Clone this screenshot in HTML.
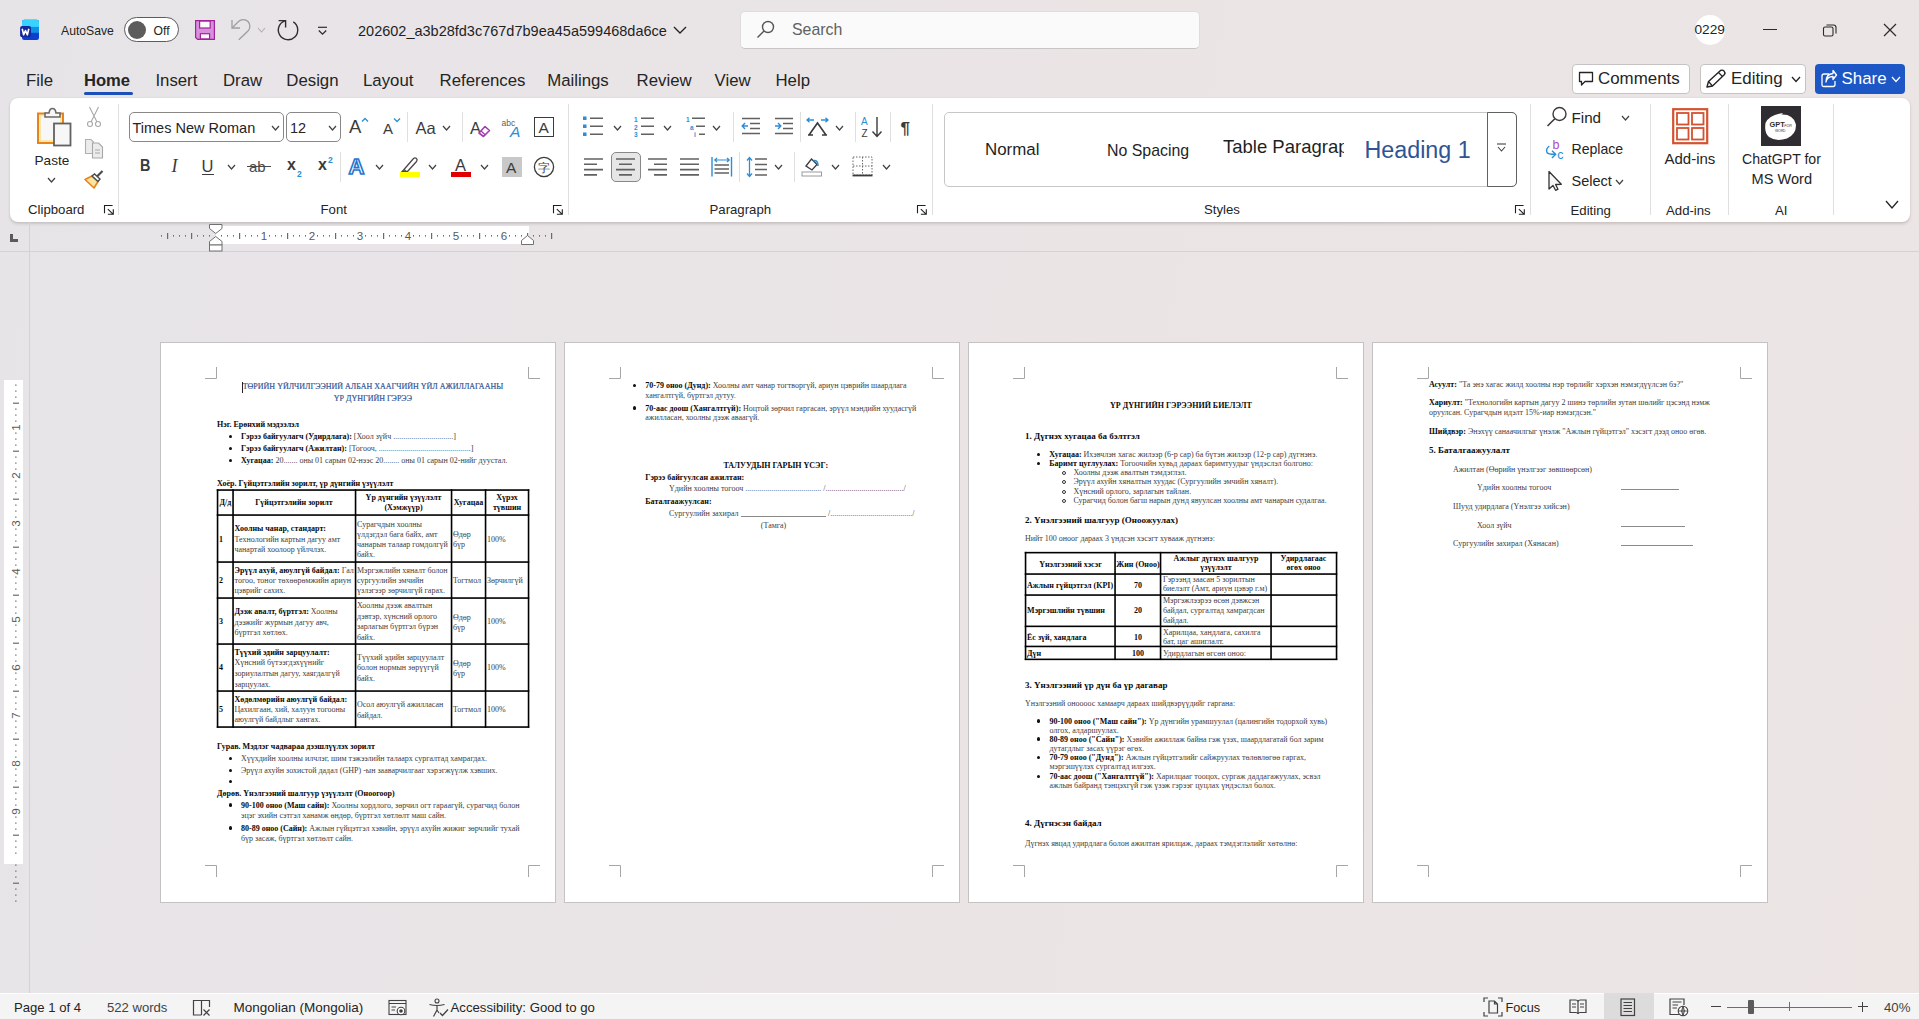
<!DOCTYPE html>
<html><head><meta charset="utf-8"><title>Word</title><style>
*{margin:0;padding:0;box-sizing:border-box}
html,body{width:1919px;height:1019px;overflow:hidden}
body{position:relative;background:linear-gradient(100deg,#e7e4e8 0%,#eae4e6 45%,#ece5e4 100%);font-family:"Liberation Sans",sans-serif;color:#242424}
.a{position:absolute;white-space:nowrap}
svg{position:absolute;overflow:visible}
</style></head><body>
<svg style="left:14px;top:14px" width="32" height="32" viewBox="0 0 32 32"><rect x="8" y="5.8" width="17" height="20.1" rx="2.2" fill="#0c3ecf"/>
<path d="M10.2 5.8 H22.8 Q25 5.8 25 8 V12.9 H8 V8 Q8 5.8 10.2 5.8 Z" fill="#38d2fe"/>
<rect x="8" y="12.9" width="17" height="5.9" fill="#1190e3"/>
<rect x="6.1" y="12.1" width="10.9" height="11.1" rx="2" fill="#10299c"/>
<path d="M8.2 14.7 L9.6 20.8 L11.5 16.6 L13.4 20.8 L14.8 14.7" fill="none" stroke="#fff" stroke-width="1.6" stroke-linejoin="round"/></svg>
<div class="a" style="left:61px;top:24.67px;font-size:12.2px;line-height:1;color:#242424;font-weight:normal;font-family:'Liberation Sans';">AutoSave</div>
<div class="a" style="left:124px;top:17px;width:55px;height:25px;border:1px solid #5c5c5c;border-radius:13px;background:#fff"></div>
<div class="a" style="left:128px;top:21px;width:18px;height:18px;border-radius:50%;background:#5c5c5c"></div>
<div class="a" style="left:153.5px;top:24.67px;font-size:12.2px;line-height:1;color:#242424;font-weight:normal;font-family:'Liberation Sans';">Off</div>
<svg style="left:195px;top:20px" width="20" height="20" viewBox="0 0 20 20"><path d="M0.6 0.6 H19.4 V19.4 H2.6 L0.6 17.4 Z" fill="#d88fdc" stroke="#a1239c" stroke-width="1.2"/>
<rect x="4.6" y="1.1" width="10.6" height="6.9" fill="#fafafa" stroke="#a1239c" stroke-width="1.2"/>
<rect x="5.4" y="13.7" width="9.2" height="5.2" fill="#fafafa" stroke="#a1239c" stroke-width="1.2"/></svg>
<svg style="left:0px;top:0px" width="1" height="1" viewBox="0 0 1 1"><path d="M232 20 V28 H240" fill="none" stroke="#9e9e9e" stroke-width="1.3"/><path d="M232.3 27.7 L238.5 21.5 C241 19 245.5 19 248 21.5 C250.5 24 250.5 28.5 248 31 L238.8 39.8" fill="none" stroke="#9e9e9e" stroke-width="1.3"/></svg>
<svg style="left:257px;top:26.5px" width="9" height="6" viewBox="0 0 9 6"><path d="M1 1 L4.5 5 L8 1" fill="none" stroke="#b0b0b0" stroke-width="1.1"/></svg>
<svg style="left:0px;top:0px" width="1" height="1" viewBox="0 0 1 1"><path d="M293.3 21.9 A9.7 9.7 0 1 1 284.8 20.9" fill="none" stroke="#2e2e2e" stroke-width="1.4"/><path d="M278.6 20.6 H285.6 V27.4" fill="none" stroke="#2e2e2e" stroke-width="1.4"/></svg>
<svg style="left:0px;top:0px" width="1" height="1" viewBox="0 0 1 1"><path d="M318 27.3 H327" stroke="#2e2e2e" stroke-width="1.2"/><path d="M318.8 30.5 L322.5 34.2 L326.2 30.5" fill="none" stroke="#2e2e2e" stroke-width="1.3"/></svg>
<div class="a" style="left:358px;top:23.73px;font-size:14.5px;line-height:1;color:#1f1f1f;font-weight:normal;font-family:'Liberation Sans';">202602_a3b28fd3c767d7b9ea45a599468da6ce</div>
<svg style="left:673px;top:25.5px" width="14" height="8" viewBox="0 0 14 8"><path d="M1 1 L7.0 7 L13 1" fill="none" stroke="#242424" stroke-width="1.4"/></svg>
<div class="a" style="left:740px;top:11px;width:460px;height:38px;background:#fafafa;border:1px solid #dedcdc;border-bottom-color:#c6c4c4;border-radius:5px"></div>
<svg style="left:756px;top:20px" width="20" height="20" viewBox="0 0 20 20"><circle cx="12" cy="7" r="5.5" fill="none" stroke="#555" stroke-width="1.4"/><path d="M8 11 L1.5 17.5" stroke="#555" stroke-width="1.5"/></svg>
<div class="a" style="left:792px;top:22.04px;font-size:15.9px;line-height:1;color:#616161;font-weight:normal;font-family:'Liberation Sans';">Search</div>
<div class="a" style="left:1695px;top:15px;width:30px;height:30px;border-radius:50%;background:#fff"></div>
<div class="a" style="left:1694.5px;top:22.90px;font-size:13.7px;line-height:1;color:#1f1f1f;font-weight:normal;font-family:'Liberation Sans';">0229</div>
<div class="a" style="left:1763px;top:29px;width:14px;height:1.2px;background:#2b2b2b"></div>
<svg style="left:1822px;top:23px" width="16" height="14" viewBox="0 0 16 14"><rect x="1.5" y="4" width="9.5" height="9" rx="1.5" fill="none" stroke="#2b2b2b" stroke-width="1.1"/><path d="M4.5 2 H11.5 Q14 2 14 4.5 V10.5" fill="none" stroke="#2b2b2b" stroke-width="1.1"/></svg>
<svg style="left:1883px;top:23px" width="14" height="14" viewBox="0 0 14 14"><path d="M1 1 L13 13 M13 1 L1 13" stroke="#2b2b2b" stroke-width="1.2"/></svg>
<div class="a" style="left:26px;top:72.78px;font-size:16.8px;line-height:1;color:#242424;font-weight:normal;font-family:'Liberation Sans';">File</div>
<div class="a" style="left:84px;top:72.95px;font-size:16.6px;line-height:1;color:#242424;font-weight:bold;font-family:'Liberation Sans';">Home</div>
<div class="a" style="left:155.4px;top:72.78px;font-size:16.8px;line-height:1;color:#242424;font-weight:normal;font-family:'Liberation Sans';">Insert</div>
<div class="a" style="left:223px;top:72.78px;font-size:16.8px;line-height:1;color:#242424;font-weight:normal;font-family:'Liberation Sans';">Draw</div>
<div class="a" style="left:286.3px;top:72.78px;font-size:16.8px;line-height:1;color:#242424;font-weight:normal;font-family:'Liberation Sans';">Design</div>
<div class="a" style="left:363px;top:72.78px;font-size:16.8px;line-height:1;color:#242424;font-weight:normal;font-family:'Liberation Sans';">Layout</div>
<div class="a" style="left:439.6px;top:72.78px;font-size:16.8px;line-height:1;color:#242424;font-weight:normal;font-family:'Liberation Sans';">References</div>
<div class="a" style="left:547.2px;top:72.78px;font-size:16.8px;line-height:1;color:#242424;font-weight:normal;font-family:'Liberation Sans';">Mailings</div>
<div class="a" style="left:636.6px;top:72.78px;font-size:16.8px;line-height:1;color:#242424;font-weight:normal;font-family:'Liberation Sans';">Review</div>
<div class="a" style="left:714.6px;top:72.78px;font-size:16.8px;line-height:1;color:#242424;font-weight:normal;font-family:'Liberation Sans';">View</div>
<div class="a" style="left:775.5px;top:72.78px;font-size:16.8px;line-height:1;color:#242424;font-weight:normal;font-family:'Liberation Sans';">Help</div>
<div class="a" style="left:84px;top:92px;width:49px;height:3px;background:#1c4fb8;border-radius:2px"></div>
<div class="a" style="left:1572px;top:64px;width:118px;height:30px;background:#fff;border:1px solid #c5c3c3;border-radius:4px"></div>
<svg style="left:1578px;top:71px" width="16" height="16" viewBox="0 0 16 16"><path d="M1.5 1.5 H14.5 V10.5 H7 L3.5 14 V10.5 H1.5 Z" fill="none" stroke="#242424" stroke-width="1.3" stroke-linejoin="round"/></svg>
<div class="a" style="left:1598px;top:71.19px;font-size:16.9px;line-height:1;color:#242424;font-weight:normal;font-family:'Liberation Sans';">Comments</div>
<div class="a" style="left:1700px;top:64px;width:106px;height:30px;background:#fff;border:1px solid #c5c3c3;border-radius:4px"></div>
<svg style="left:1705px;top:69px" width="22" height="20" viewBox="0 0 22 20"><path d="M2 18 L3.5 12.5 L15.5 1.5 Q17.5 0.5 19 2 Q20.5 3.5 19.5 5.5 L7.5 17 Z" fill="none" stroke="#242424" stroke-width="1.4" stroke-linejoin="round"/><path d="M13.5 3.5 L17.5 7.5 M3.5 12.5 L7.5 17" stroke="#242424" stroke-width="1.2"/></svg>
<div class="a" style="left:1731px;top:71.19px;font-size:16.9px;line-height:1;color:#242424;font-weight:normal;font-family:'Liberation Sans';">Editing</div>
<svg style="left:1791px;top:76px" width="10" height="6.5" viewBox="0 0 10 6.5"><path d="M1 1 L5.0 5.5 L9 1" fill="none" stroke="#242424" stroke-width="1.3"/></svg>
<div class="a" style="left:1815px;top:64px;width:90px;height:30px;background:#1d57c6;border-radius:4px"></div>
<svg style="left:1820px;top:69px" width="17" height="19" viewBox="0 0 17 19"><path d="M9 5 H4 Q2 5 2 7 V16 Q2 17.5 3.5 17.5 H13 Q15 17.5 15 15.5 V12" fill="none" stroke="#fff" stroke-width="1.3"/><path d="M6 13 Q7 7.5 13 7.5 V10.5 L16.5 6 L13 1.5 V4.5 Q6 5 6 13 Z" fill="none" stroke="#fff" stroke-width="1.3" stroke-linejoin="round"/></svg>
<div class="a" style="left:1841.5px;top:71.19px;font-size:16.9px;line-height:1;color:#ffffff;font-weight:normal;font-family:'Liberation Sans';">Share</div>
<svg style="left:1891px;top:76px" width="10" height="6.5" viewBox="0 0 10 6.5"><path d="M1 1 L5.0 5.5 L9 1" fill="none" stroke="#ffffff" stroke-width="1.3"/></svg>
<div class="a" style="left:10px;top:98px;width:1900px;height:124px;background:#fff;border-radius:8px;box-shadow:0 1.5px 3px rgba(40,20,20,0.16),0 0 1px rgba(0,0,0,0.08)"></div>
<div class="a" style="left:118px;top:104px;width:1px;height:111px;background:#e1dfdd"></div>
<div class="a" style="left:568px;top:104px;width:1px;height:111px;background:#e1dfdd"></div>
<div class="a" style="left:932px;top:104px;width:1px;height:111px;background:#e1dfdd"></div>
<div class="a" style="left:1530px;top:104px;width:1px;height:111px;background:#e1dfdd"></div>
<div class="a" style="left:1650px;top:104px;width:1px;height:111px;background:#e1dfdd"></div>
<div class="a" style="left:1728px;top:104px;width:1px;height:111px;background:#e1dfdd"></div>
<div class="a" style="left:1833px;top:104px;width:1px;height:111px;background:#e1dfdd"></div>
<svg style="left:36px;top:107px" width="36" height="40" viewBox="0 0 36 40"><rect x="2" y="6.5" width="25" height="29.5" fill="#fbe7a8" stroke="#e8831a" stroke-width="2"/>
<rect x="5" y="9" width="19" height="24" fill="#f7f7f7"/>
<path d="M9 6 H13 Q13.5 1.5 16.5 1.5 Q19.5 1.5 20 6 H24 V10 H9 Z" fill="#f7f7f7" stroke="#6a6a6a" stroke-width="1.6"/>
<rect x="18" y="16.5" width="16.5" height="22" fill="#f7f7f7" stroke="#616161" stroke-width="1.8"/></svg>
<div class="a" style="left:34.5px;top:153.99px;font-size:13.6px;line-height:1;color:#242424;font-weight:normal;font-family:'Liberation Sans';">Paste</div>
<svg style="left:47px;top:177px" width="9" height="6" viewBox="0 0 9 6"><path d="M1 1 L4.5 5 L8 1" fill="none" stroke="#424242" stroke-width="1.2"/></svg>
<svg style="left:86px;top:106px" width="16" height="22" viewBox="0 0 16 22"><path d="M3.5 1 L11 16 M12.5 1 L5 16" stroke="#a8a8a8" stroke-width="1.1"/><circle cx="4" cy="18" r="2.5" fill="none" stroke="#a8a8a8" stroke-width="1.1"/><circle cx="12" cy="18" r="2.5" fill="none" stroke="#a8a8a8" stroke-width="1.1"/></svg>
<svg style="left:84px;top:138px" width="22" height="22" viewBox="0 0 22 22"><path d="M1.5 1.5 H7 L9.5 4 V15.5 H1.5 Z" fill="#ececec" stroke="#b0b0b0" stroke-width="1.1"/><path d="M8.5 5 H14.5 L18.5 9 V20 H8.5 Z" fill="#ececec" stroke="#a8a8a8" stroke-width="1.1"/><path d="M11 12 H16 M11 15 H16" stroke="#a8a8a8" stroke-width="1"/></svg>
<svg style="left:83px;top:169px" width="22" height="22" viewBox="0 0 22 22"><path d="M2 10.5 L11 19 L15 12.5 L9 7 Z" fill="#fbe3a0" stroke="#e8831a" stroke-width="1.6" stroke-linejoin="round"/>
<path d="M9 7 L15 12.5 L17 10 L11.5 5 Z" fill="#fff" stroke="#4a4a4a" stroke-width="1.4"/><path d="M14 7.5 L19.5 2" stroke="#4a4a4a" stroke-width="2.2"/></svg>
<div class="a" style="left:28px;top:203.43px;font-size:13.2px;line-height:1;color:#242424;font-weight:normal;font-family:'Liberation Sans';">Clipboard</div>
<svg style="left:104px;top:205px" width="11" height="11" viewBox="0 0 11 11"><path d="M8.6 0.5 H0.5 V8.3" stroke="#1f1f1f" stroke-width="1.1" fill="none"/><path d="M3.85 4.2 L9.3 9.3 M3.85 9.3 H9.3 V4.3" stroke="#1f1f1f" stroke-width="1.1" fill="none"/></svg>
<div class="a" style="left:129px;top:112px;width:155px;height:30px;border:1px solid #8a8886;border-radius:5px;background:#fff"></div>
<div class="a" style="left:132.5px;top:121.23px;font-size:14.5px;line-height:1;color:#242424;font-weight:normal;font-family:'Liberation Sans';">Times New Roman</div>
<svg style="left:271px;top:125px" width="9" height="6" viewBox="0 0 9 6"><path d="M1 1 L4.5 5 L8 1" fill="none" stroke="#424242" stroke-width="1.2"/></svg>
<div class="a" style="left:286px;top:112px;width:55px;height:30px;border:1px solid #8a8886;border-radius:5px;background:#fff"></div>
<div class="a" style="left:290px;top:121.23px;font-size:14.5px;line-height:1;color:#242424;font-weight:normal;font-family:'Liberation Sans';">12</div>
<svg style="left:328px;top:125px" width="9" height="6" viewBox="0 0 9 6"><path d="M1 1 L4.5 5 L8 1" fill="none" stroke="#424242" stroke-width="1.2"/></svg>
<div class="a" style="left:349px;top:117.84px;font-size:18.5px;line-height:1;color:#3b3b3b;font-weight:normal;font-family:'Liberation Sans';">A</div>
<svg style="left:361px;top:117px" width="8" height="6" viewBox="0 0 8 6"><path d="M1 4.5 L4 1.5 L7 4.5" fill="none" stroke="#2c8ed6" stroke-width="1.3"/></svg>
<div class="a" style="left:383px;top:120.80px;font-size:15px;line-height:1;color:#3b3b3b;font-weight:normal;font-family:'Liberation Sans';">A</div>
<svg style="left:393px;top:117px" width="8" height="6" viewBox="0 0 8 6"><path d="M1 1.5 L4 4.5 L7 1.5" fill="none" stroke="#2c8ed6" stroke-width="1.3"/></svg>
<div class="a" style="left:407px;top:112px;width:1px;height:30px;background:#e1dfdd"></div>
<div class="a" style="left:415.5px;top:119.53px;font-size:16.5px;line-height:1;color:#3b3b3b;font-weight:normal;font-family:'Liberation Sans';">Aa</div>
<svg style="left:442px;top:125px" width="9" height="6" viewBox="0 0 9 6"><path d="M1 1 L4.5 5 L8 1" fill="none" stroke="#424242" stroke-width="1.2"/></svg>
<div class="a" style="left:462px;top:112px;width:1px;height:30px;background:#e1dfdd"></div>
<div class="a" style="left:470px;top:119.53px;font-size:16.5px;line-height:1;color:#3b3b3b;font-weight:normal;font-family:'Liberation Sans';">A</div>
<svg style="left:477px;top:124px" width="14" height="14" viewBox="0 0 14 14"><path d="M2 9 L8 2.5 L12.5 6.5 L6.5 12.5 Z" fill="#fff" stroke="#a23cb0" stroke-width="1.6" stroke-linejoin="round"/><path d="M4 7 L8.5 11" stroke="#a23cb0" stroke-width="1.3"/></svg>
<div class="a" style="left:501.5px;top:118.80px;font-size:8.5px;line-height:1;color:#616161;font-weight:normal;font-family:'Liberation Sans';">abc</div>
<div class="a" style="left:510px;top:123.88px;font-size:15.5px;line-height:1;color:#2c8ed6;font-weight:normal;font-family:'Liberation Sans';font-style:italic">A</div>
<div class="a" style="left:534px;top:117px;width:20px;height:20px;border:1.6px solid #3b3b3b"></div>
<div class="a" style="left:538.5px;top:119.88px;font-size:15.5px;line-height:1;color:#3b3b3b;font-weight:normal;font-family:'Liberation Sans';">A</div>
<div class="a" style="left:139.5px;top:157.78px;font-size:16.8px;line-height:1;color:#3b3b3b;font-weight:bold;font-family:'Liberation Sans';transform:scaleX(0.86);transform-origin:0 0">B</div>
<div class="a" style="left:171.5px;top:156.76px;font-size:18px;line-height:1;color:#3b3b3b;font-weight:normal;font-family:'Liberation Serif';font-style:italic">I</div>
<div class="a" style="left:201.5px;top:158.03px;font-size:16.5px;line-height:1;color:#3b3b3b;font-weight:normal;font-family:'Liberation Sans';">U</div>
<div class="a" style="left:202px;top:174px;width:12px;height:1.3px;background:#3b3b3b"></div>
<svg style="left:227px;top:164px" width="9" height="6" viewBox="0 0 9 6"><path d="M1 1 L4.5 5 L8 1" fill="none" stroke="#424242" stroke-width="1.2"/></svg>
<div class="a" style="left:249px;top:159.30px;font-size:15px;line-height:1;color:#4a4a4a;font-weight:normal;font-family:'Liberation Sans';">ab</div>
<div class="a" style="left:247px;top:166px;width:24px;height:1.2px;background:#4a4a4a"></div>
<div class="a" style="left:287px;top:157.46px;font-size:16px;line-height:1;color:#3b3b3b;font-weight:bold;font-family:'Liberation Sans';">x</div>
<div class="a" style="left:297px;top:169.80px;font-size:8.5px;line-height:1;color:#2c8ed6;font-weight:bold;font-family:'Liberation Sans';">2</div>
<div class="a" style="left:318px;top:157.46px;font-size:16px;line-height:1;color:#3b3b3b;font-weight:bold;font-family:'Liberation Sans';">x</div>
<div class="a" style="left:328px;top:155.80px;font-size:8.5px;line-height:1;color:#2c8ed6;font-weight:bold;font-family:'Liberation Sans';">2</div>
<div class="a" style="left:340px;top:152px;width:1px;height:30px;background:#e1dfdd"></div>
<div class="a" style="left:348.5px;top:156.38px;font-size:22px;line-height:1;color:#fff;font-weight:bold;font-family:'Liberation Sans';-webkit-text-stroke:1.6px #1f77d0">A</div>
<svg style="left:375px;top:164px" width="9" height="6" viewBox="0 0 9 6"><path d="M1 1 L4.5 5 L8 1" fill="none" stroke="#424242" stroke-width="1.2"/></svg>
<svg style="left:399px;top:156px" width="22" height="22" viewBox="0 0 22 22"><path d="M5 13.5 L14.5 2.5 Q16 1.2 17.5 2.5 Q18.8 3.8 17.5 5.5 L8 16 Z" fill="#fff" stroke="#4a4a4a" stroke-width="1.3"/><path d="M5 13.5 L2.5 15.5 H7 L8 16" fill="#666" stroke="#4a4a4a" stroke-width="1"/><rect x="1" y="16" width="20" height="5" fill="#ffff00"/></svg>
<svg style="left:428px;top:164px" width="9" height="6" viewBox="0 0 9 6"><path d="M1 1 L4.5 5 L8 1" fill="none" stroke="#424242" stroke-width="1.2"/></svg>
<div class="a" style="left:455px;top:157.03px;font-size:16.5px;line-height:1;color:#3b3b3b;font-weight:normal;font-family:'Liberation Sans';">A</div>
<div class="a" style="left:451px;top:172px;width:20px;height:5px;background:#e00000"></div>
<svg style="left:480px;top:164px" width="9" height="6" viewBox="0 0 9 6"><path d="M1 1 L4.5 5 L8 1" fill="none" stroke="#424242" stroke-width="1.2"/></svg>
<div class="a" style="left:502px;top:157px;width:20px;height:20px;background:#c8c8c8"></div>
<div class="a" style="left:506px;top:159.88px;font-size:15.5px;line-height:1;color:#3b3b3b;font-weight:normal;font-family:'Liberation Sans';">A</div>
<svg style="left:533px;top:156px" width="22" height="22" viewBox="0 0 22 22"><circle cx="11" cy="11" r="9.6" fill="none" stroke="#3b3b3b" stroke-width="1.3"/><text x="11" y="15.5" font-size="12" text-anchor="middle" fill="#3b3b3b" font-family="Liberation Sans">字</text></svg>
<div class="a" style="left:320.5px;top:203.43px;font-size:13.2px;line-height:1;color:#242424;font-weight:normal;font-family:'Liberation Sans';">Font</div>
<svg style="left:553px;top:205px" width="11" height="11" viewBox="0 0 11 11"><path d="M8.6 0.5 H0.5 V8.3" stroke="#1f1f1f" stroke-width="1.1" fill="none"/><path d="M3.85 4.2 L9.3 9.3 M3.85 9.3 H9.3 V4.3" stroke="#1f1f1f" stroke-width="1.1" fill="none"/></svg>
<svg style="left:583px;top:116px" width="21" height="21" viewBox="0 0 21 21"><rect x="0" y="0.5" width="3.5" height="3.5" fill="#2c8ed6"/><rect x="0" y="8.5" width="3.5" height="3.5" fill="#2c8ed6"/><rect x="0" y="16.5" width="3.5" height="3.5" fill="#2c8ed6"/><path d="M7 2.2 H20 M7 10.2 H20 M7 18.2 H20" stroke="#616161" stroke-width="1.6"/></svg>
<svg style="left:613px;top:125px" width="9" height="6" viewBox="0 0 9 6"><path d="M1 1 L4.5 5 L8 1" fill="none" stroke="#424242" stroke-width="1.2"/></svg>
<svg style="left:634px;top:116px" width="21" height="21" viewBox="0 0 21 21"><text x="0" y="6" font-size="6.5" fill="#2c8ed6" font-weight="bold" font-family="Liberation Sans">1</text><text x="0" y="14" font-size="6.5" fill="#2c8ed6" font-weight="bold" font-family="Liberation Sans">2</text><text x="0" y="21" font-size="6.5" fill="#2c8ed6" font-weight="bold" font-family="Liberation Sans">3</text><path d="M7 2.2 H20 M7 10.2 H20 M7 18.2 H20" stroke="#616161" stroke-width="1.6"/></svg>
<svg style="left:663px;top:125px" width="9" height="6" viewBox="0 0 9 6"><path d="M1 1 L4.5 5 L8 1" fill="none" stroke="#424242" stroke-width="1.2"/></svg>
<svg style="left:686px;top:116px" width="21" height="21" viewBox="0 0 21 21"><text x="0" y="6" font-size="6.5" fill="#2c8ed6" font-weight="bold" font-family="Liberation Sans">1</text><text x="4" y="14" font-size="6.5" fill="#2c8ed6" font-weight="bold" font-family="Liberation Sans">a</text><text x="8" y="21" font-size="6.5" fill="#2c8ed6" font-weight="bold" font-family="Liberation Sans">i</text><path d="M6 2.2 H19 M10 10.2 H19 M13 18.2 H19" stroke="#616161" stroke-width="1.6"/></svg>
<svg style="left:712px;top:125px" width="9" height="6" viewBox="0 0 9 6"><path d="M1 1 L4.5 5 L8 1" fill="none" stroke="#424242" stroke-width="1.2"/></svg>
<div class="a" style="left:733px;top:112px;width:1px;height:30px;background:#e1dfdd"></div>
<svg style="left:741px;top:117px" width="20" height="19" viewBox="0 0 20 19"><path d="M1 1.5 H19 M9 6.5 H19 M9 11.5 H19 M1 16.5 H19" stroke="#616161" stroke-width="1.6"/><path d="M7 9 H1.5 M4 6 L1.2 9 L4 12" stroke="#2c8ed6" stroke-width="1.4" fill="none"/></svg>
<svg style="left:774px;top:117px" width="20" height="19" viewBox="0 0 20 19"><path d="M1 1.5 H19 M9 6.5 H19 M9 11.5 H19 M1 16.5 H19" stroke="#616161" stroke-width="1.6"/><path d="M1 9 H6.5 M4 6 L6.8 9 L4 12" stroke="#2c8ed6" stroke-width="1.4" fill="none"/></svg>
<div class="a" style="left:800px;top:112px;width:1px;height:30px;background:#e1dfdd"></div>
<svg style="left:806px;top:117px" width="23" height="20" viewBox="0 0 23 20"><path d="M3 18 L11.5 6 L20 18 M2 18 H7 M16 18 H21" stroke="#3b3b3b" stroke-width="1.6" fill="none"/><path d="M1 3 H8 M3.5 0.8 L1 3 L3.5 5.2 M22 3 H15 M19.5 0.8 L22 3 L19.5 5.2" stroke="#2c8ed6" stroke-width="1.3" fill="none"/></svg>
<svg style="left:835px;top:125px" width="9" height="6" viewBox="0 0 9 6"><path d="M1 1 L4.5 5 L8 1" fill="none" stroke="#424242" stroke-width="1.2"/></svg>
<div class="a" style="left:855px;top:112px;width:1px;height:30px;background:#e1dfdd"></div>
<svg style="left:861px;top:116px" width="23" height="22" viewBox="0 0 23 22"><text x="0" y="9" font-size="10" fill="#2c8ed6" font-family="Liberation Sans">A</text><text x="0.5" y="21" font-size="10" fill="#3b3b3b" font-family="Liberation Sans">Z</text><path d="M16 1 V20 M11.5 15.5 L16 20.5 L20.5 15.5" stroke="#3b3b3b" stroke-width="1.4" fill="none"/></svg>
<div class="a" style="left:890px;top:112px;width:1px;height:30px;background:#e1dfdd"></div>
<div class="a" style="left:900.5px;top:120.11px;font-size:17px;line-height:1;color:#3b3b3b;font-weight:bold;font-family:'Liberation Sans';">¶</div>
<svg style="left:584px;top:157px" width="20" height="20" viewBox="0 0 20 20"><path d="M0 2.0 H19 M0 7.3 H13 M0 12.6 H19 M0 17.9 H13 " stroke="#616161" stroke-width="1.6"/></svg>
<div class="a" style="left:611px;top:152px;width:30px;height:30px;background:#e6e6e6;border:1px solid #8a8886;border-radius:5px"></div>
<svg style="left:616px;top:157px" width="20" height="20" viewBox="0 0 20 20"><path d="M0 2.0 H19 M3 7.3 H16 M0 12.6 H19 M3 17.9 H16 " stroke="#616161" stroke-width="1.6"/></svg>
<svg style="left:648px;top:157px" width="20" height="20" viewBox="0 0 20 20"><path d="M0 2.0 H19 M6 7.3 H19 M0 12.6 H19 M6 17.9 H19 " stroke="#616161" stroke-width="1.6"/></svg>
<svg style="left:680px;top:157px" width="20" height="20" viewBox="0 0 20 20"><path d="M0 2.0 H19 M0 7.3 H19 M0 12.6 H19 M0 17.9 H19 " stroke="#616161" stroke-width="1.6"/></svg>
<svg style="left:711px;top:156px" width="22" height="22" viewBox="0 0 22 22"><path d="M1 1 V20.5 M20.5 1 V20.5" stroke="#2c8ed6" stroke-width="1.4"/><path d="M4 4 H18 M6 2 L3.8 4 L6 6 M16 2 L18.2 4 L16 6" stroke="#2c8ed6" stroke-width="1.2" fill="none"/><path d="M3.5 9 H18 M3.5 13 H18 M3.5 17 H18" stroke="#616161" stroke-width="1.6"/></svg>
<div class="a" style="left:739px;top:152px;width:1px;height:30px;background:#e1dfdd"></div>
<svg style="left:746px;top:156px" width="22" height="22" viewBox="0 0 22 22"><path d="M3.5 2 V20 M1 4.5 L3.5 1.5 L6 4.5 M1 17.5 L3.5 20.5 L6 17.5" stroke="#2c8ed6" stroke-width="1.3" fill="none"/><path d="M9 3 H21 M9 8.5 H21 M9 13.5 H21 M9 19 H21" stroke="#616161" stroke-width="1.6"/></svg>
<svg style="left:774px;top:164px" width="9" height="6" viewBox="0 0 9 6"><path d="M1 1 L4.5 5 L8 1" fill="none" stroke="#424242" stroke-width="1.2"/></svg>
<div class="a" style="left:794px;top:152px;width:1px;height:30px;background:#e1dfdd"></div>
<svg style="left:801px;top:156px" width="22" height="22" viewBox="0 0 22 22"><path d="M5 10 L10.5 3 L16 8.5 L11 14 Z" fill="none" stroke="#3b3b3b" stroke-width="1.3"/><path d="M12.5 4.5 Q17 4 17 10" fill="none" stroke="#2c8ed6" stroke-width="1.6"/><rect x="1" y="16" width="19.5" height="4" fill="none" stroke="#9a9a9a" stroke-width="1"/></svg>
<svg style="left:831px;top:164px" width="9" height="6" viewBox="0 0 9 6"><path d="M1 1 L4.5 5 L8 1" fill="none" stroke="#424242" stroke-width="1.2"/></svg>
<svg style="left:852px;top:156px" width="22" height="22" viewBox="0 0 22 22"><rect x="1" y="1" width="19" height="18" fill="none" stroke="#6a6a6a" stroke-width="1" stroke-dasharray="1.5 1.5"/><path d="M10.5 1 V19 M1 10 H20" stroke="#6a6a6a" stroke-width="1" stroke-dasharray="1.5 1.5"/><path d="M0.5 19.5 H20.5" stroke="#3b3b3b" stroke-width="1.8"/></svg>
<svg style="left:882px;top:164px" width="9" height="6" viewBox="0 0 9 6"><path d="M1 1 L4.5 5 L8 1" fill="none" stroke="#424242" stroke-width="1.2"/></svg>
<div class="a" style="left:709.5px;top:203.43px;font-size:13.2px;line-height:1;color:#242424;font-weight:normal;font-family:'Liberation Sans';">Paragraph</div>
<svg style="left:917px;top:205px" width="11" height="11" viewBox="0 0 11 11"><path d="M8.6 0.5 H0.5 V8.3" stroke="#1f1f1f" stroke-width="1.1" fill="none"/><path d="M3.85 4.2 L9.3 9.3 M3.85 9.3 H9.3 V4.3" stroke="#1f1f1f" stroke-width="1.1" fill="none"/></svg>
<div class="a" style="left:944px;top:112px;width:573px;height:75px;border:1px solid #c8c6c4;border-radius:5px;background:#fff"></div>
<div class="a" style="left:1487px;top:112px;width:30px;height:75px;border:1px solid #616161;border-radius:0 5px 5px 0"></div>
<svg style="left:1496px;top:143px" width="11" height="10" viewBox="0 0 11 10"><path d="M1 1 H10" stroke="#424242" stroke-width="1.1"/><path d="M2 4 L5.5 8 L9 4" fill="none" stroke="#424242" stroke-width="1.1"/></svg>
<div class="a" style="left:985px;top:142.19px;font-size:16.9px;line-height:1;color:#1f1f1f;font-weight:normal;font-family:'Liberation Sans';">Normal</div>
<div class="a" style="left:1107px;top:142.54px;font-size:15.9px;line-height:1;color:#1f1f1f;font-weight:normal;font-family:'Liberation Sans';">No Spacing</div>
<div class="a" style="left:1223px;top:138px;width:121px;height:24px;overflow:hidden"><div class="a" style="left:0;top:0.42px;font-size:18.5px;line-height:1;color:#1f1f1f">Table Paragraph</div></div>
<div class="a" style="left:1364.5px;top:138.78px;font-size:23.3px;line-height:1;color:#2f5496;font-weight:normal;font-family:'Liberation Sans';">Heading 1</div>
<div class="a" style="left:1204px;top:203.43px;font-size:13.2px;line-height:1;color:#242424;font-weight:normal;font-family:'Liberation Sans';">Styles</div>
<svg style="left:1515px;top:205px" width="11" height="11" viewBox="0 0 11 11"><path d="M8.6 0.5 H0.5 V8.3" stroke="#1f1f1f" stroke-width="1.1" fill="none"/><path d="M3.85 4.2 L9.3 9.3 M3.85 9.3 H9.3 V4.3" stroke="#1f1f1f" stroke-width="1.1" fill="none"/></svg>
<svg style="left:1546px;top:106px" width="22" height="22" viewBox="0 0 22 22"><circle cx="13.5" cy="8" r="6.5" fill="none" stroke="#3b3b3b" stroke-width="1.4"/><path d="M8.8 12.7 L1.5 20" stroke="#3b3b3b" stroke-width="1.6"/></svg>
<div class="a" style="left:1571.5px;top:109.63px;font-size:15.2px;line-height:1;color:#242424;font-weight:normal;font-family:'Liberation Sans';">Find</div>
<svg style="left:1621px;top:114.5px" width="9" height="6" viewBox="0 0 9 6"><path d="M1 1 L4.5 5 L8 1" fill="none" stroke="#424242" stroke-width="1.2"/></svg>
<svg style="left:0px;top:0px" width="1" height="1" viewBox="0 0 1 1"><text x="1552.4" y="148.8" font-size="12.5" fill="#b146c2" font-family="Liberation Sans">b</text><text x="1557.3" y="158.7" font-size="12.5" fill="#2c8ed6" font-family="Liberation Sans">c</text><path d="M1549.3 146 Q1545.5 149 1547 152.5 Q1548.5 154.5 1555.3 154.3 M1552 150.7 L1555.7 154.3 L1552 158" fill="none" stroke="#2c8ed6" stroke-width="1.4"/></svg>
<div class="a" style="left:1571.5px;top:142.36px;font-size:14.1px;line-height:1;color:#242424;font-weight:normal;font-family:'Liberation Sans';">Replace</div>
<svg style="left:0px;top:0px" width="1" height="1" viewBox="0 0 1 1"><path d="M1549 171.5 L1549 189 L1553 185.5 L1555.6 190.3 L1558 189.2 L1555.6 184.5 L1561.3 184.3 Z" fill="#f7f7f7" stroke="#333" stroke-width="1.3" stroke-linejoin="round"/></svg>
<div class="a" style="left:1571.5px;top:174.23px;font-size:14.5px;line-height:1;color:#242424;font-weight:normal;font-family:'Liberation Sans';">Select</div>
<svg style="left:1615px;top:179px" width="9" height="6" viewBox="0 0 9 6"><path d="M1 1 L4.5 5 L8 1" fill="none" stroke="#424242" stroke-width="1.2"/></svg>
<div class="a" style="left:1570.5px;top:203.63px;font-size:13.2px;line-height:1;color:#242424;font-weight:normal;font-family:'Liberation Sans';">Editing</div>
<svg style="left:1672px;top:108px" width="37" height="37" viewBox="0 0 37 37"><rect x="1.2" y="1.2" width="34" height="34" fill="none" stroke="#d35230" stroke-width="2.2"/><rect x="5" y="5" width="11.5" height="11.5" fill="none" stroke="#d35230" stroke-width="1.8"/><rect x="20" y="5" width="11.5" height="11.5" fill="none" stroke="#d35230" stroke-width="1.8"/><rect x="5" y="20" width="11.5" height="11.5" fill="none" stroke="#d35230" stroke-width="1.8"/><rect x="20" y="20" width="11.5" height="11.5" fill="none" stroke="#d35230" stroke-width="1.8"/></svg>
<div class="a" style="left:1664.5px;top:151.30px;font-size:15px;line-height:1;color:#242424;font-weight:normal;font-family:'Liberation Sans';">Add-ins</div>
<div class="a" style="left:1666px;top:203.63px;font-size:13.2px;line-height:1;color:#242424;font-weight:normal;font-family:'Liberation Sans';">Add-ins</div>
<div class="a" style="left:1761px;top:106px;width:40px;height:40px;background:#2f2d31"></div>
<svg style="left:1761px;top:106px" width="40" height="40" viewBox="0 0 40 40"><path d="M4.5 17 Q8 9 22 7 L20.5 8.5 Q32 8 34.8 18 Q36 28 26 32.5 Q15 36 8 31 Q3 27 4.5 17 Z" fill="#fff"/><text x="8.6" y="21.3" font-size="7.4" font-weight="bold" fill="#2f2d31" font-family="Liberation Sans">GPT</text><text x="23.3" y="21.3" font-size="3.6" fill="#2f2d31" font-style="italic" font-family="Liberation Sans">FOR</text><text x="14" y="25.6" font-size="3.3" fill="#2f2d31" font-family="Liberation Sans">WORD</text></svg>
<div class="a" style="left:1742px;top:152.06px;font-size:14.1px;line-height:1;color:#242424;font-weight:normal;font-family:'Liberation Sans';">ChatGPT for</div>
<div class="a" style="left:1751.5px;top:171.64px;font-size:14.6px;line-height:1;color:#242424;font-weight:normal;font-family:'Liberation Sans';">MS Word</div>
<div class="a" style="left:1775px;top:203.63px;font-size:13.2px;line-height:1;color:#242424;font-weight:normal;font-family:'Liberation Sans';">AI</div>
<svg style="left:1885px;top:200px" width="14" height="9" viewBox="0 0 14 9"><path d="M1 1 L7.0 8 L13 1" fill="none" stroke="#242424" stroke-width="1.3"/></svg>
<div class="a" style="left:29px;top:222px;width:1px;height:771px;background:#d6d1d2"></div>
<div class="a" style="left:0px;top:251px;width:1919px;height:1px;background:#d6d1d2"></div>
<div class="a" style="left:10px;top:234px;width:2.8px;height:8px;background:#5a5a5a"></div>
<div class="a" style="left:10px;top:239.2px;width:8px;height:2.8px;background:#5a5a5a"></div>
<div class="a" style="left:216px;top:226px;width:313px;height:18px;background:#fff"></div>
<svg style="left:0px;top:0px" width="1" height="1" viewBox="0 0 1 1"><rect x="161" y="235" width="1" height="1.6" fill="#6a6a6a"/><rect x="167" y="233" width="1.2" height="6" fill="#6a6a6a"/><rect x="173" y="235" width="1" height="1.6" fill="#6a6a6a"/><rect x="179" y="235" width="1" height="1.6" fill="#6a6a6a"/><rect x="185" y="235" width="1" height="1.6" fill="#6a6a6a"/><rect x="191" y="233" width="1.2" height="6" fill="#6a6a6a"/><rect x="197" y="235" width="1" height="1.6" fill="#6a6a6a"/><rect x="203" y="235" width="1" height="1.6" fill="#6a6a6a"/><rect x="209" y="235" width="1" height="1.6" fill="#6a6a6a"/><rect x="221" y="235" width="1" height="1.6" fill="#6a6a6a"/><rect x="227" y="235" width="1" height="1.6" fill="#6a6a6a"/><rect x="233" y="235" width="1" height="1.6" fill="#6a6a6a"/><rect x="239" y="233" width="1.2" height="6" fill="#6a6a6a"/><rect x="245" y="235" width="1" height="1.6" fill="#6a6a6a"/><rect x="251" y="235" width="1" height="1.6" fill="#6a6a6a"/><rect x="257" y="235" width="1" height="1.6" fill="#6a6a6a"/><text x="264" y="239.6" font-size="11.6" fill="#5a5a5a" text-anchor="middle" font-family="Liberation Sans">1</text><rect x="269" y="235" width="1" height="1.6" fill="#6a6a6a"/><rect x="275" y="235" width="1" height="1.6" fill="#6a6a6a"/><rect x="281" y="235" width="1" height="1.6" fill="#6a6a6a"/><rect x="287" y="233" width="1.2" height="6" fill="#6a6a6a"/><rect x="293" y="235" width="1" height="1.6" fill="#6a6a6a"/><rect x="299" y="235" width="1" height="1.6" fill="#6a6a6a"/><rect x="305" y="235" width="1" height="1.6" fill="#6a6a6a"/><text x="312" y="239.6" font-size="11.6" fill="#5a5a5a" text-anchor="middle" font-family="Liberation Sans">2</text><rect x="317" y="235" width="1" height="1.6" fill="#6a6a6a"/><rect x="323" y="235" width="1" height="1.6" fill="#6a6a6a"/><rect x="329" y="235" width="1" height="1.6" fill="#6a6a6a"/><rect x="335" y="233" width="1.2" height="6" fill="#6a6a6a"/><rect x="341" y="235" width="1" height="1.6" fill="#6a6a6a"/><rect x="347" y="235" width="1" height="1.6" fill="#6a6a6a"/><rect x="353" y="235" width="1" height="1.6" fill="#6a6a6a"/><text x="360" y="239.6" font-size="11.6" fill="#5a5a5a" text-anchor="middle" font-family="Liberation Sans">3</text><rect x="365" y="235" width="1" height="1.6" fill="#6a6a6a"/><rect x="371" y="235" width="1" height="1.6" fill="#6a6a6a"/><rect x="377" y="235" width="1" height="1.6" fill="#6a6a6a"/><rect x="383" y="233" width="1.2" height="6" fill="#6a6a6a"/><rect x="389" y="235" width="1" height="1.6" fill="#6a6a6a"/><rect x="395" y="235" width="1" height="1.6" fill="#6a6a6a"/><rect x="401" y="235" width="1" height="1.6" fill="#6a6a6a"/><text x="408" y="239.6" font-size="11.6" fill="#5a5a5a" text-anchor="middle" font-family="Liberation Sans">4</text><rect x="413" y="235" width="1" height="1.6" fill="#6a6a6a"/><rect x="419" y="235" width="1" height="1.6" fill="#6a6a6a"/><rect x="425" y="235" width="1" height="1.6" fill="#6a6a6a"/><rect x="431" y="233" width="1.2" height="6" fill="#6a6a6a"/><rect x="437" y="235" width="1" height="1.6" fill="#6a6a6a"/><rect x="443" y="235" width="1" height="1.6" fill="#6a6a6a"/><rect x="449" y="235" width="1" height="1.6" fill="#6a6a6a"/><text x="456" y="239.6" font-size="11.6" fill="#5a5a5a" text-anchor="middle" font-family="Liberation Sans">5</text><rect x="461" y="235" width="1" height="1.6" fill="#6a6a6a"/><rect x="467" y="235" width="1" height="1.6" fill="#6a6a6a"/><rect x="473" y="235" width="1" height="1.6" fill="#6a6a6a"/><rect x="479" y="233" width="1.2" height="6" fill="#6a6a6a"/><rect x="485" y="235" width="1" height="1.6" fill="#6a6a6a"/><rect x="491" y="235" width="1" height="1.6" fill="#6a6a6a"/><rect x="497" y="235" width="1" height="1.6" fill="#6a6a6a"/><text x="504" y="239.6" font-size="11.6" fill="#5a5a5a" text-anchor="middle" font-family="Liberation Sans">6</text><rect x="509" y="235" width="1" height="1.6" fill="#6a6a6a"/><rect x="515" y="235" width="1" height="1.6" fill="#6a6a6a"/><rect x="521" y="235" width="1" height="1.6" fill="#6a6a6a"/><rect x="527" y="233" width="1.2" height="6" fill="#6a6a6a"/><rect x="533" y="235" width="1" height="1.6" fill="#6a6a6a"/><rect x="539" y="235" width="1" height="1.6" fill="#6a6a6a"/><rect x="545" y="235" width="1" height="1.6" fill="#6a6a6a"/><rect x="551" y="233" width="1.2" height="6" fill="#6a6a6a"/></svg>
<svg style="left:208px;top:223px" width="16" height="30" viewBox="0 0 16 30"><path d="M1.5 1.5 H14 V5.5 L7.75 10.5 L1.5 5.5 Z" fill="#fff" stroke="#707070" stroke-width="1"/><path d="M7.75 13.5 L14 18.5 V22 H1.5 V18.5 Z" fill="#fff" stroke="#707070" stroke-width="1"/><rect x="1.5" y="22" width="12.5" height="6" fill="#fff" stroke="#707070" stroke-width="1"/></svg>
<svg style="left:520px;top:234px" width="16" height="12" viewBox="0 0 16 12"><path d="M7.5 1.5 L13.5 6.5 V10.5 H1.5 V6.5 Z" fill="#fff" stroke="#707070" stroke-width="1"/></svg>
<div class="a" style="left:4px;top:380px;width:19px;height:484px;background:#fff"></div>
<svg style="left:0px;top:0px" width="1" height="1" viewBox="0 0 1 1"><rect x="15" y="384.6" width="1.6" height="1" fill="#6a6a6a"/><rect x="15" y="390.6" width="1.6" height="1" fill="#6a6a6a"/><rect x="15" y="396.6" width="1.6" height="1" fill="#6a6a6a"/><rect x="13" y="402.6" width="6" height="1.2" fill="#6a6a6a"/><rect x="15" y="408.6" width="1.6" height="1" fill="#6a6a6a"/><rect x="15" y="414.6" width="1.6" height="1" fill="#6a6a6a"/><rect x="15" y="420.6" width="1.6" height="1" fill="#6a6a6a"/><text x="0" y="0" font-size="11.6" fill="#5a5a5a" text-anchor="middle" font-family="Liberation Sans" transform="translate(19.6 427.6) rotate(-90)">1</text><rect x="15" y="432.6" width="1.6" height="1" fill="#6a6a6a"/><rect x="15" y="438.6" width="1.6" height="1" fill="#6a6a6a"/><rect x="15" y="444.6" width="1.6" height="1" fill="#6a6a6a"/><rect x="13" y="450.6" width="6" height="1.2" fill="#6a6a6a"/><rect x="15" y="456.6" width="1.6" height="1" fill="#6a6a6a"/><rect x="15" y="462.6" width="1.6" height="1" fill="#6a6a6a"/><rect x="15" y="468.6" width="1.6" height="1" fill="#6a6a6a"/><text x="0" y="0" font-size="11.6" fill="#5a5a5a" text-anchor="middle" font-family="Liberation Sans" transform="translate(19.6 475.6) rotate(-90)">2</text><rect x="15" y="480.6" width="1.6" height="1" fill="#6a6a6a"/><rect x="15" y="486.6" width="1.6" height="1" fill="#6a6a6a"/><rect x="15" y="492.6" width="1.6" height="1" fill="#6a6a6a"/><rect x="13" y="498.6" width="6" height="1.2" fill="#6a6a6a"/><rect x="15" y="504.6" width="1.6" height="1" fill="#6a6a6a"/><rect x="15" y="510.6" width="1.6" height="1" fill="#6a6a6a"/><rect x="15" y="516.6" width="1.6" height="1" fill="#6a6a6a"/><text x="0" y="0" font-size="11.6" fill="#5a5a5a" text-anchor="middle" font-family="Liberation Sans" transform="translate(19.6 523.6) rotate(-90)">3</text><rect x="15" y="528.6" width="1.6" height="1" fill="#6a6a6a"/><rect x="15" y="534.6" width="1.6" height="1" fill="#6a6a6a"/><rect x="15" y="540.6" width="1.6" height="1" fill="#6a6a6a"/><rect x="13" y="546.6" width="6" height="1.2" fill="#6a6a6a"/><rect x="15" y="552.6" width="1.6" height="1" fill="#6a6a6a"/><rect x="15" y="558.6" width="1.6" height="1" fill="#6a6a6a"/><rect x="15" y="564.6" width="1.6" height="1" fill="#6a6a6a"/><text x="0" y="0" font-size="11.6" fill="#5a5a5a" text-anchor="middle" font-family="Liberation Sans" transform="translate(19.6 571.6) rotate(-90)">4</text><rect x="15" y="576.6" width="1.6" height="1" fill="#6a6a6a"/><rect x="15" y="582.6" width="1.6" height="1" fill="#6a6a6a"/><rect x="15" y="588.6" width="1.6" height="1" fill="#6a6a6a"/><rect x="13" y="594.6" width="6" height="1.2" fill="#6a6a6a"/><rect x="15" y="600.6" width="1.6" height="1" fill="#6a6a6a"/><rect x="15" y="606.6" width="1.6" height="1" fill="#6a6a6a"/><rect x="15" y="612.6" width="1.6" height="1" fill="#6a6a6a"/><text x="0" y="0" font-size="11.6" fill="#5a5a5a" text-anchor="middle" font-family="Liberation Sans" transform="translate(19.6 619.6) rotate(-90)">5</text><rect x="15" y="624.6" width="1.6" height="1" fill="#6a6a6a"/><rect x="15" y="630.6" width="1.6" height="1" fill="#6a6a6a"/><rect x="15" y="636.6" width="1.6" height="1" fill="#6a6a6a"/><rect x="13" y="642.6" width="6" height="1.2" fill="#6a6a6a"/><rect x="15" y="648.6" width="1.6" height="1" fill="#6a6a6a"/><rect x="15" y="654.6" width="1.6" height="1" fill="#6a6a6a"/><rect x="15" y="660.6" width="1.6" height="1" fill="#6a6a6a"/><text x="0" y="0" font-size="11.6" fill="#5a5a5a" text-anchor="middle" font-family="Liberation Sans" transform="translate(19.6 667.6) rotate(-90)">6</text><rect x="15" y="672.6" width="1.6" height="1" fill="#6a6a6a"/><rect x="15" y="678.6" width="1.6" height="1" fill="#6a6a6a"/><rect x="15" y="684.6" width="1.6" height="1" fill="#6a6a6a"/><rect x="13" y="690.6" width="6" height="1.2" fill="#6a6a6a"/><rect x="15" y="696.6" width="1.6" height="1" fill="#6a6a6a"/><rect x="15" y="702.6" width="1.6" height="1" fill="#6a6a6a"/><rect x="15" y="708.6" width="1.6" height="1" fill="#6a6a6a"/><text x="0" y="0" font-size="11.6" fill="#5a5a5a" text-anchor="middle" font-family="Liberation Sans" transform="translate(19.6 715.6) rotate(-90)">7</text><rect x="15" y="720.6" width="1.6" height="1" fill="#6a6a6a"/><rect x="15" y="726.6" width="1.6" height="1" fill="#6a6a6a"/><rect x="15" y="732.6" width="1.6" height="1" fill="#6a6a6a"/><rect x="13" y="738.6" width="6" height="1.2" fill="#6a6a6a"/><rect x="15" y="744.6" width="1.6" height="1" fill="#6a6a6a"/><rect x="15" y="750.6" width="1.6" height="1" fill="#6a6a6a"/><rect x="15" y="756.6" width="1.6" height="1" fill="#6a6a6a"/><text x="0" y="0" font-size="11.6" fill="#5a5a5a" text-anchor="middle" font-family="Liberation Sans" transform="translate(19.6 763.6) rotate(-90)">8</text><rect x="15" y="768.6" width="1.6" height="1" fill="#6a6a6a"/><rect x="15" y="774.6" width="1.6" height="1" fill="#6a6a6a"/><rect x="15" y="780.6" width="1.6" height="1" fill="#6a6a6a"/><rect x="13" y="786.6" width="6" height="1.2" fill="#6a6a6a"/><rect x="15" y="792.6" width="1.6" height="1" fill="#6a6a6a"/><rect x="15" y="798.6" width="1.6" height="1" fill="#6a6a6a"/><rect x="15" y="804.6" width="1.6" height="1" fill="#6a6a6a"/><text x="0" y="0" font-size="11.6" fill="#5a5a5a" text-anchor="middle" font-family="Liberation Sans" transform="translate(19.6 811.6) rotate(-90)">9</text><rect x="15" y="816.6" width="1.6" height="1" fill="#6a6a6a"/><rect x="15" y="822.6" width="1.6" height="1" fill="#6a6a6a"/><rect x="15" y="828.6" width="1.6" height="1" fill="#6a6a6a"/><rect x="13" y="834.6" width="6" height="1.2" fill="#6a6a6a"/><rect x="15" y="840.6" width="1.6" height="1" fill="#6a6a6a"/><rect x="15" y="846.6" width="1.6" height="1" fill="#6a6a6a"/><rect x="15" y="852.6" width="1.6" height="1" fill="#6a6a6a"/><rect x="15" y="864.6" width="1.6" height="1" fill="#6a6a6a"/><rect x="15" y="870.6" width="1.6" height="1" fill="#6a6a6a"/><rect x="15" y="876.6" width="1.6" height="1" fill="#6a6a6a"/><rect x="13" y="882.6" width="6" height="1.2" fill="#6a6a6a"/><rect x="15" y="888.6" width="1.6" height="1" fill="#6a6a6a"/><rect x="15" y="894.6" width="1.6" height="1" fill="#6a6a6a"/><rect x="15" y="900.6" width="1.6" height="1" fill="#6a6a6a"/></svg>
<div class="a" style="left:160px;top:342px;width:396px;height:561px;background:#fff;border:1px solid #c4c2c2"></div>
<svg style="left:0px;top:0px" width="1" height="1" viewBox="0 0 1 1"><path d="M205 378.5 H216.5 V367" fill="none" stroke="#a6a6a6" stroke-width="1"/>
<path d="M540 378.5 H528.5 V367" fill="none" stroke="#a6a6a6" stroke-width="1"/>
<path d="M205 865.5 H216.5 V877" fill="none" stroke="#a6a6a6" stroke-width="1"/>
<path d="M540 865.5 H528.5 V877" fill="none" stroke="#a6a6a6" stroke-width="1"/></svg>
<div class="a" style="left:564px;top:342px;width:396px;height:561px;background:#fff;border:1px solid #c4c2c2"></div>
<svg style="left:0px;top:0px" width="1" height="1" viewBox="0 0 1 1"><path d="M609 378.5 H620.5 V367" fill="none" stroke="#a6a6a6" stroke-width="1"/>
<path d="M944 378.5 H932.5 V367" fill="none" stroke="#a6a6a6" stroke-width="1"/>
<path d="M609 865.5 H620.5 V877" fill="none" stroke="#a6a6a6" stroke-width="1"/>
<path d="M944 865.5 H932.5 V877" fill="none" stroke="#a6a6a6" stroke-width="1"/></svg>
<div class="a" style="left:968px;top:342px;width:396px;height:561px;background:#fff;border:1px solid #c4c2c2"></div>
<svg style="left:0px;top:0px" width="1" height="1" viewBox="0 0 1 1"><path d="M1013 378.5 H1024.5 V367" fill="none" stroke="#a6a6a6" stroke-width="1"/>
<path d="M1348 378.5 H1336.5 V367" fill="none" stroke="#a6a6a6" stroke-width="1"/>
<path d="M1013 865.5 H1024.5 V877" fill="none" stroke="#a6a6a6" stroke-width="1"/>
<path d="M1348 865.5 H1336.5 V877" fill="none" stroke="#a6a6a6" stroke-width="1"/></svg>
<div class="a" style="left:1372px;top:342px;width:396px;height:561px;background:#fff;border:1px solid #c4c2c2"></div>
<svg style="left:0px;top:0px" width="1" height="1" viewBox="0 0 1 1"><path d="M1417 378.5 H1428.5 V367" fill="none" stroke="#a6a6a6" stroke-width="1"/>
<path d="M1752 378.5 H1740.5 V367" fill="none" stroke="#a6a6a6" stroke-width="1"/>
<path d="M1417 865.5 H1428.5 V877" fill="none" stroke="#a6a6a6" stroke-width="1"/>
<path d="M1752 865.5 H1740.5 V877" fill="none" stroke="#a6a6a6" stroke-width="1"/></svg>
<div class="a" style="left:242.7px;top:383.40px;font-size:8px;line-height:1;font-family:'Liberation Serif';-webkit-text-stroke:0.18px #2f5496"><span style="font-weight:normal;color:#2f5496">ТӨРИЙН ҮЙЛЧИЛГЭЭНИЙ АЛБАН ХААГЧИЙН ҮЙЛ АЖИЛЛАГААНЫ</span></div>
<div class="a" style="left:333.8px;top:395.10px;font-size:8px;line-height:1;font-family:'Liberation Serif';-webkit-text-stroke:0.18px #2f5496"><span style="font-weight:normal;color:#2f5496">ҮР ДҮНГИЙН ГЭРЭЭ</span></div>
<div class="a" style="left:242px;top:382px;width:1px;height:11px;background:#222"></div>
<div class="a" style="left:217px;top:420.90px;font-size:8px;line-height:1;font-family:'Liberation Serif';"><span style="font-weight:bold;color:#0a0a0a">Нэг. Ерөнхий мэдээлэл</span></div>
<div class="a" style="left:229.1px;top:434.70000000000005px;width:3.1px;height:3.3px;background:#111;border-radius:50%"></div>
<div class="a" style="left:241px;top:432.90px;font-size:8px;line-height:1;font-family:'Liberation Serif';"><span style="font-weight:bold;color:#0a0a0a">Гэрээ байгуулагч (Удирдлага):</span><span style="font-weight:normal;color:#404040"> [Хоол зүйч ..............................]</span></div>
<div class="a" style="left:229.1px;top:446.8px;width:3.1px;height:3.3px;background:#111;border-radius:50%"></div>
<div class="a" style="left:241px;top:445.00px;font-size:8px;line-height:1;font-family:'Liberation Serif';"><span style="font-weight:bold;color:#0a0a0a">Гэрээ байгуулагч (Ажилтан):</span><span style="font-weight:normal;color:#404040"> [Тогооч, ..............................................]</span></div>
<div class="a" style="left:229.1px;top:458.5px;width:3.1px;height:3.3px;background:#111;border-radius:50%"></div>
<div class="a" style="left:241px;top:456.70px;font-size:8px;line-height:1;font-family:'Liberation Serif';"><span style="font-weight:bold;color:#0a0a0a">Хугацаа:</span><span style="font-weight:normal;color:#404040"> 20....... оны 01 сарын 02-нээс 20........ оны 01 сарын 02-нийг дуустал.</span></div>
<div class="a" style="left:217px;top:480.00px;font-size:8px;line-height:1;font-family:'Liberation Serif';"><span style="font-weight:bold;color:#0a0a0a">Хоёр. Гүйцэтгэлийн зорилт, үр дүнгийн үзүүлэлт</span></div>
<svg style="left:0px;top:0px" width="1" height="1" viewBox="0 0 1 1"><rect x="216.75" y="489.25" width="1.6" height="238.5" fill="#000"/><rect x="232.25" y="489.25" width="1.6" height="238.5" fill="#000"/><rect x="354.75" y="489.25" width="1.6" height="238.5" fill="#000"/><rect x="450.75" y="489.25" width="1.6" height="238.5" fill="#000"/><rect x="484.75" y="489.25" width="1.6" height="238.5" fill="#000"/><rect x="527.75" y="489.25" width="1.6" height="238.5" fill="#000"/><rect x="216.75" y="489.25" width="312.5" height="1.6" fill="#000"/><rect x="216.75" y="514.25" width="312.5" height="1.6" fill="#000"/><rect x="216.75" y="561.25" width="312.5" height="1.6" fill="#000"/><rect x="216.75" y="597.25" width="312.5" height="1.6" fill="#000"/><rect x="216.75" y="643.25" width="312.5" height="1.6" fill="#000"/><rect x="216.75" y="690.25" width="312.5" height="1.6" fill="#000"/><rect x="216.75" y="726.25" width="312.5" height="1.6" fill="#000"/></svg>
<div class="a" style="left:218px;width:15px;text-align:center;top:498.90px;font-size:8px;line-height:1;font-family:'Liberation Serif';"><span style="font-weight:bold;color:#0a0a0a">Д/д</span></div>
<div class="a" style="left:233px;width:122px;text-align:center;top:498.90px;font-size:8px;line-height:1;font-family:'Liberation Serif';"><span style="font-weight:bold;color:#0a0a0a">Гүйцэтгэлийн зорилт</span></div>
<div class="a" style="left:356px;width:95px;text-align:center;top:494.30px;font-size:8px;line-height:1;font-family:'Liberation Serif';"><span style="font-weight:bold;color:#0a0a0a">Үр дүнгийн үзүүлэлт</span></div>
<div class="a" style="left:356px;width:95px;text-align:center;top:503.70px;font-size:8px;line-height:1;font-family:'Liberation Serif';"><span style="font-weight:bold;color:#0a0a0a">(Хэмжүүр)</span></div>
<div class="a" style="left:452px;width:33px;text-align:center;top:498.90px;font-size:8px;line-height:1;font-family:'Liberation Serif';"><span style="font-weight:bold;color:#0a0a0a">Хугацаа</span></div>
<div class="a" style="left:486px;width:42px;text-align:center;top:494.30px;font-size:8px;line-height:1;font-family:'Liberation Serif';"><span style="font-weight:bold;color:#0a0a0a">Хүрэх</span></div>
<div class="a" style="left:486px;width:42px;text-align:center;top:503.70px;font-size:8px;line-height:1;font-family:'Liberation Serif';"><span style="font-weight:bold;color:#0a0a0a">түвшин</span></div>
<div class="a" style="left:219px;top:536.00px;font-size:8px;line-height:1;font-family:'Liberation Serif';"><span style="font-weight:bold;color:#0a0a0a">1</span></div>
<div class="a" style="left:234.5px;top:525.20px;font-size:8px;line-height:1;font-family:'Liberation Serif';"><span style="font-weight:bold;color:#0a0a0a">Хоолны чанар, стандарт:</span></div>
<div class="a" style="left:234.5px;top:535.50px;font-size:8px;line-height:1;font-family:'Liberation Serif';"><span style="font-weight:normal;color:#404040">Технологийн картын дагуу амт</span></div>
<div class="a" style="left:234.5px;top:545.80px;font-size:8px;line-height:1;font-family:'Liberation Serif';"><span style="font-weight:normal;color:#404040">чанартай хоолоор үйлчлэх.</span></div>
<div class="a" style="left:357px;top:520.50px;font-size:8px;line-height:1;font-family:'Liberation Serif';"><span style="font-weight:normal;color:#404040">Сурагчдын хоолны</span></div>
<div class="a" style="left:357px;top:530.60px;font-size:8px;line-height:1;font-family:'Liberation Serif';"><span style="font-weight:normal;color:#404040">үлдэгдэл бага байх, амт</span></div>
<div class="a" style="left:357px;top:540.90px;font-size:8px;line-height:1;font-family:'Liberation Serif';"><span style="font-weight:normal;color:#404040">чанарын талаар гомдолгүй</span></div>
<div class="a" style="left:357px;top:551.30px;font-size:8px;line-height:1;font-family:'Liberation Serif';"><span style="font-weight:normal;color:#404040">байх.</span></div>
<div class="a" style="left:453px;top:531.10px;font-size:8px;line-height:1;font-family:'Liberation Serif';"><span style="font-weight:normal;color:#404040">Өдөр</span></div>
<div class="a" style="left:453px;top:541.20px;font-size:8px;line-height:1;font-family:'Liberation Serif';"><span style="font-weight:normal;color:#404040">бүр</span></div>
<div class="a" style="left:487px;top:536.00px;font-size:8px;line-height:1;font-family:'Liberation Serif';"><span style="font-weight:normal;color:#404040">100%</span></div>
<div class="a" style="left:219px;top:576.80px;font-size:8px;line-height:1;font-family:'Liberation Serif';"><span style="font-weight:bold;color:#0a0a0a">2</span></div>
<div class="a" style="left:234.5px;top:566.50px;font-size:8px;line-height:1;font-family:'Liberation Serif';"><span style="font-weight:bold;color:#0a0a0a">Эрүүл ахуй, аюулгүй байдал:</span><span style="font-weight:normal;color:#404040"> Гал</span></div>
<div class="a" style="left:234.5px;top:576.80px;font-size:8px;line-height:1;font-family:'Liberation Serif';"><span style="font-weight:normal;color:#404040">тогоо, тоног төхөөрөмжийн ариун</span></div>
<div class="a" style="left:234.5px;top:587.40px;font-size:8px;line-height:1;font-family:'Liberation Serif';"><span style="font-weight:normal;color:#404040">цэврийг сахих.</span></div>
<div class="a" style="left:357px;top:566.50px;font-size:8px;line-height:1;font-family:'Liberation Serif';"><span style="font-weight:normal;color:#404040">Мэргэжлийн хяналт болон</span></div>
<div class="a" style="left:357px;top:576.80px;font-size:8px;line-height:1;font-family:'Liberation Serif';"><span style="font-weight:normal;color:#404040">сургуулийн эмчийн</span></div>
<div class="a" style="left:357px;top:587.40px;font-size:8px;line-height:1;font-family:'Liberation Serif';"><span style="font-weight:normal;color:#404040">үзлэгээр зөрчилгүй гарах.</span></div>
<div class="a" style="left:453px;top:576.80px;font-size:8px;line-height:1;font-family:'Liberation Serif';"><span style="font-weight:normal;color:#404040">Тогтмол</span></div>
<div class="a" style="left:487px;top:576.80px;font-size:8px;line-height:1;font-family:'Liberation Serif';"><span style="font-weight:normal;color:#404040">Зөрчилгүй</span></div>
<div class="a" style="left:219px;top:618.30px;font-size:8px;line-height:1;font-family:'Liberation Serif';"><span style="font-weight:bold;color:#0a0a0a">3</span></div>
<div class="a" style="left:234.5px;top:608.40px;font-size:8px;line-height:1;font-family:'Liberation Serif';"><span style="font-weight:bold;color:#0a0a0a">Дээж авалт, бүртгэл:</span><span style="font-weight:normal;color:#404040"> Хоолны</span></div>
<div class="a" style="left:234.5px;top:618.50px;font-size:8px;line-height:1;font-family:'Liberation Serif';"><span style="font-weight:normal;color:#404040">дээжийг журмын дагуу авч,</span></div>
<div class="a" style="left:234.5px;top:628.60px;font-size:8px;line-height:1;font-family:'Liberation Serif';"><span style="font-weight:normal;color:#404040">бүртгэл хөтлөх.</span></div>
<div class="a" style="left:357px;top:602.20px;font-size:8px;line-height:1;font-family:'Liberation Serif';"><span style="font-weight:normal;color:#404040">Хоолны дээж авалтын</span></div>
<div class="a" style="left:357px;top:612.70px;font-size:8px;line-height:1;font-family:'Liberation Serif';"><span style="font-weight:normal;color:#404040">дэвтэр, хүнсний орлого</span></div>
<div class="a" style="left:357px;top:623.30px;font-size:8px;line-height:1;font-family:'Liberation Serif';"><span style="font-weight:normal;color:#404040">зарлагын бүртгэл бүрэн</span></div>
<div class="a" style="left:357px;top:633.90px;font-size:8px;line-height:1;font-family:'Liberation Serif';"><span style="font-weight:normal;color:#404040">байх.</span></div>
<div class="a" style="left:453px;top:613.70px;font-size:8px;line-height:1;font-family:'Liberation Serif';"><span style="font-weight:normal;color:#404040">Өдөр</span></div>
<div class="a" style="left:453px;top:623.90px;font-size:8px;line-height:1;font-family:'Liberation Serif';"><span style="font-weight:normal;color:#404040">бүр</span></div>
<div class="a" style="left:487px;top:618.30px;font-size:8px;line-height:1;font-family:'Liberation Serif';"><span style="font-weight:normal;color:#404040">100%</span></div>
<div class="a" style="left:219px;top:664.10px;font-size:8px;line-height:1;font-family:'Liberation Serif';"><span style="font-weight:bold;color:#0a0a0a">4</span></div>
<div class="a" style="left:234.5px;top:648.70px;font-size:8px;line-height:1;font-family:'Liberation Serif';"><span style="font-weight:bold;color:#0a0a0a">Түүхий эдийн зарцуулалт:</span></div>
<div class="a" style="left:234.5px;top:659.30px;font-size:8px;line-height:1;font-family:'Liberation Serif';"><span style="font-weight:normal;color:#404040">Хүнсний бүтээгдэхүүнийг</span></div>
<div class="a" style="left:234.5px;top:669.90px;font-size:8px;line-height:1;font-family:'Liberation Serif';"><span style="font-weight:normal;color:#404040">зориулалтын дагуу, хаягдалгүй</span></div>
<div class="a" style="left:234.5px;top:680.50px;font-size:8px;line-height:1;font-family:'Liberation Serif';"><span style="font-weight:normal;color:#404040">зарцуулах.</span></div>
<div class="a" style="left:357px;top:653.80px;font-size:8px;line-height:1;font-family:'Liberation Serif';"><span style="font-weight:normal;color:#404040">Түүхий эдийн зарцуулалт</span></div>
<div class="a" style="left:357px;top:664.30px;font-size:8px;line-height:1;font-family:'Liberation Serif';"><span style="font-weight:normal;color:#404040">болон нормын зөрүүгүй</span></div>
<div class="a" style="left:357px;top:674.80px;font-size:8px;line-height:1;font-family:'Liberation Serif';"><span style="font-weight:normal;color:#404040">байх.</span></div>
<div class="a" style="left:453px;top:659.60px;font-size:8px;line-height:1;font-family:'Liberation Serif';"><span style="font-weight:normal;color:#404040">Өдөр</span></div>
<div class="a" style="left:453px;top:670.10px;font-size:8px;line-height:1;font-family:'Liberation Serif';"><span style="font-weight:normal;color:#404040">бүр</span></div>
<div class="a" style="left:487px;top:664.10px;font-size:8px;line-height:1;font-family:'Liberation Serif';"><span style="font-weight:normal;color:#404040">100%</span></div>
<div class="a" style="left:219px;top:705.50px;font-size:8px;line-height:1;font-family:'Liberation Serif';"><span style="font-weight:bold;color:#0a0a0a">5</span></div>
<div class="a" style="left:234.5px;top:695.50px;font-size:8px;line-height:1;font-family:'Liberation Serif';"><span style="font-weight:bold;color:#0a0a0a">Хөдөлмөрийн аюулгүй байдал:</span></div>
<div class="a" style="left:234.5px;top:705.80px;font-size:8px;line-height:1;font-family:'Liberation Serif';"><span style="font-weight:normal;color:#404040">Цахилгаан, хий, халуун тогооны</span></div>
<div class="a" style="left:234.5px;top:716.30px;font-size:8px;line-height:1;font-family:'Liberation Serif';"><span style="font-weight:normal;color:#404040">аюулгүй байдлыг хангах.</span></div>
<div class="a" style="left:357px;top:700.90px;font-size:8px;line-height:1;font-family:'Liberation Serif';"><span style="font-weight:normal;color:#404040">Осол аюулгүй ажилласан</span></div>
<div class="a" style="left:357px;top:711.50px;font-size:8px;line-height:1;font-family:'Liberation Serif';"><span style="font-weight:normal;color:#404040">байдал.</span></div>
<div class="a" style="left:453px;top:705.50px;font-size:8px;line-height:1;font-family:'Liberation Serif';"><span style="font-weight:normal;color:#404040">Тогтмол</span></div>
<div class="a" style="left:487px;top:705.50px;font-size:8px;line-height:1;font-family:'Liberation Serif';"><span style="font-weight:normal;color:#404040">100%</span></div>
<div class="a" style="left:217px;top:742.60px;font-size:8px;line-height:1;font-family:'Liberation Serif';"><span style="font-weight:bold;color:#0a0a0a">Гурав. Мэдлэг чадвараа дээшлүүлэх зорилт</span></div>
<div class="a" style="left:229.1px;top:756.7px;width:3.1px;height:3.3px;background:#111;border-radius:50%"></div>
<div class="a" style="left:241px;top:754.90px;font-size:8px;line-height:1;font-family:'Liberation Serif';"><span style="font-weight:normal;color:#404040">Хүүхдийн хоолны илчлэг, шим тэжээлийн талаарх сургалтад хамрагдах.</span></div>
<div class="a" style="left:229.1px;top:768.5px;width:3.1px;height:3.3px;background:#111;border-radius:50%"></div>
<div class="a" style="left:241px;top:766.70px;font-size:8px;line-height:1;font-family:'Liberation Serif';"><span style="font-weight:normal;color:#404040">Эрүүл ахуйн зохистой дадал (GHP) -ын зааварчилгааг хэрэгжүүлж хэвших.</span></div>
<div class="a" style="left:229.1px;top:779.9px;width:3.1px;height:3.3px;background:#111;border-radius:50%"></div>
<div class="a" style="left:217px;top:789.90px;font-size:8px;line-height:1;font-family:'Liberation Serif';"><span style="font-weight:bold;color:#0a0a0a">Дөрөв. Үнэлгээний шалгуур үзүүлэлт (Оноогоор)</span></div>
<div class="a" style="left:229.1px;top:803.4px;width:3.1px;height:3.3px;background:#111;border-radius:50%"></div>
<div class="a" style="left:241px;top:801.60px;font-size:8px;line-height:1;font-family:'Liberation Serif';"><span style="font-weight:bold;color:#0a0a0a">90-100 оноо (Маш сайн):</span><span style="font-weight:normal;color:#404040"> Хоолны хордлого, зөрчил огт гараагүй, сурагчид болон</span></div>
<div class="a" style="left:241px;top:812.40px;font-size:8px;line-height:1;font-family:'Liberation Serif';"><span style="font-weight:normal;color:#404040">эцэг эхийн сэтгэл ханамж өндөр, бүртгэл хөтлөлт маш сайн.</span></div>
<div class="a" style="left:229.1px;top:826.4px;width:3.1px;height:3.3px;background:#111;border-radius:50%"></div>
<div class="a" style="left:241px;top:824.60px;font-size:8px;line-height:1;font-family:'Liberation Serif';"><span style="font-weight:bold;color:#0a0a0a">80-89 оноо (Сайн):</span><span style="font-weight:normal;color:#404040"> Ажлын гүйцэтгэл хэвийн, эрүүл ахуйн жижиг зөрчлийг тухай</span></div>
<div class="a" style="left:241px;top:834.70px;font-size:8px;line-height:1;font-family:'Liberation Serif';"><span style="font-weight:normal;color:#404040">бүр засаж, бүртгэл хөтлөлт сайн.</span></div>
<div class="a" style="left:633.1px;top:384.0px;width:3.1px;height:3.3px;background:#111;border-radius:50%"></div>
<div class="a" style="left:645.3px;top:382.20px;font-size:8px;line-height:1;font-family:'Liberation Serif';"><span style="font-weight:bold;color:#0a0a0a">70-79 оноо (Дунд):</span><span style="font-weight:normal;color:#404040"> Хоолны амт чанар тогтворгүй, ариун цэврийн шаардлага</span></div>
<div class="a" style="left:645.3px;top:392.20px;font-size:8px;line-height:1;font-family:'Liberation Serif';"><span style="font-weight:normal;color:#404040">хангалтгүй, бүртгэл дутуу.</span></div>
<div class="a" style="left:633.1px;top:406.3px;width:3.1px;height:3.3px;background:#111;border-radius:50%"></div>
<div class="a" style="left:645.3px;top:404.50px;font-size:8px;line-height:1;font-family:'Liberation Serif';"><span style="font-weight:bold;color:#0a0a0a">70-аас доош (Хангалтгүй):</span><span style="font-weight:normal;color:#404040"> Ноцтой зөрчил гаргасан, эрүүл мэндийн хуудасгүй</span></div>
<div class="a" style="left:645.3px;top:413.90px;font-size:8px;line-height:1;font-family:'Liberation Serif';"><span style="font-weight:normal;color:#404040">ажилласан, хоолны дээж аваагүй.</span></div>
<div class="a" style="left:723.4px;top:462.10px;font-size:8px;line-height:1;font-family:'Liberation Serif';"><span style="font-weight:bold;color:#0a0a0a">ТАЛУУДЫН ГАРЫН ҮСЭГ:</span></div>
<div class="a" style="left:645.3px;top:474.20px;font-size:8px;line-height:1;font-family:'Liberation Serif';"><span style="font-weight:bold;color:#0a0a0a">Гэрээ байгуулсан ажилтан:</span></div>
<div class="a" style="left:669px;top:485.40px;font-size:8px;line-height:1;font-family:'Liberation Serif';"><span style="font-weight:normal;color:#404040">Үдийн хоолны тогооч ...................................... /......................................./</span></div>
<div class="a" style="left:645.3px;top:497.90px;font-size:8px;line-height:1;font-family:'Liberation Serif';"><span style="font-weight:bold;color:#0a0a0a">Баталгаажуулсан:</span></div>
<div class="a" style="left:669px;top:510.30px;font-size:8px;line-height:1;font-family:'Liberation Serif';"><span style="font-weight:normal;color:#404040">Сургуулийн захирал </span></div>
<div class="a" style="left:741px;top:515.6px;width:85px;height:0.7px;background:#8a8a8a"></div>
<div class="a" style="left:828px;top:510.30px;font-size:8px;line-height:1;font-family:'Liberation Serif';"><span style="font-weight:normal;color:#404040">/........................................./</span></div>
<div class="a" style="left:760.8px;top:522.10px;font-size:8px;line-height:1;font-family:'Liberation Serif';"><span style="font-weight:normal;color:#404040">(Тамга)</span></div>
<div class="a" style="left:1110px;top:402.30px;font-size:8px;line-height:1;font-family:'Liberation Serif';"><span style="font-weight:bold;color:#0a0a0a">ҮР ДҮНГИЙН ГЭРЭЭНИЙ БИЕЛЭЛТ</span></div>
<div class="a" style="left:1025px;top:432.06px;font-size:9px;line-height:1;font-family:'Liberation Serif';"><span style="font-weight:bold;color:#0a0a0a">1. Дүгнэх хугацаа ба бэлтгэл</span></div>
<div class="a" style="left:1037.1px;top:453.1px;width:3.1px;height:3.3px;background:#111;border-radius:50%"></div>
<div class="a" style="left:1049.2px;top:451.30px;font-size:8px;line-height:1;font-family:'Liberation Serif';"><span style="font-weight:bold;color:#0a0a0a">Хугацаа:</span><span style="font-weight:normal;color:#404040"> Ихэвчлэн хагас жилээр (6-р сар) ба бүтэн жилээр (12-р сар) дүгнэнэ.</span></div>
<div class="a" style="left:1037.1px;top:462.0px;width:3.1px;height:3.3px;background:#111;border-radius:50%"></div>
<div class="a" style="left:1049.2px;top:460.20px;font-size:8px;line-height:1;font-family:'Liberation Serif';"><span style="font-weight:bold;color:#0a0a0a">Баримт цуглуулах:</span><span style="font-weight:normal;color:#404040"> Тогоочийн хувьд дараах баримтуудыг үндэслэл болгоно:</span></div>
<div class="a" style="left:1061.5px;top:470.8px;width:4px;height:4px;border:1px solid #333;border-radius:50%"></div>
<div class="a" style="left:1073.4px;top:469.10px;font-size:8px;line-height:1;font-family:'Liberation Serif';"><span style="font-weight:normal;color:#404040">Хоолны дээж авалтын тэмдэглэл.</span></div>
<div class="a" style="left:1061.5px;top:479.8px;width:4px;height:4px;border:1px solid #333;border-radius:50%"></div>
<div class="a" style="left:1073.4px;top:478.10px;font-size:8px;line-height:1;font-family:'Liberation Serif';"><span style="font-weight:normal;color:#404040">Эрүүл ахуйн хяналтын хуудас (Сургуулийн эмчийн хяналт).</span></div>
<div class="a" style="left:1061.5px;top:489.6px;width:4px;height:4px;border:1px solid #333;border-radius:50%"></div>
<div class="a" style="left:1073.4px;top:487.90px;font-size:8px;line-height:1;font-family:'Liberation Serif';"><span style="font-weight:normal;color:#404040">Хүнсний орлого, зарлагын тайлан.</span></div>
<div class="a" style="left:1061.5px;top:498.9px;width:4px;height:4px;border:1px solid #333;border-radius:50%"></div>
<div class="a" style="left:1073.4px;top:497.20px;font-size:8px;line-height:1;font-family:'Liberation Serif';"><span style="font-weight:normal;color:#404040">Сурагчид болон багш нарын дунд явуулсан хоолны амт чанарын судалгаа.</span></div>
<div class="a" style="left:1025px;top:516.26px;font-size:9px;line-height:1;font-family:'Liberation Serif';"><span style="font-weight:bold;color:#0a0a0a">2. Үнэлгээний шалгуур (Оноожуулах)</span></div>
<div class="a" style="left:1025px;top:535.00px;font-size:8px;line-height:1;font-family:'Liberation Serif';"><span style="font-weight:normal;color:#404040">Нийт 100 оноог дараах 3 үндсэн хэсэгт хувааж дүгнэнэ:</span></div>
<svg style="left:0px;top:0px" width="1" height="1" viewBox="0 0 1 1"><rect x="1024.75" y="551.85" width="1.6" height="108.19999999999993" fill="#000"/><rect x="1114.25" y="551.85" width="1.6" height="108.19999999999993" fill="#000"/><rect x="1159.75" y="551.85" width="1.6" height="108.19999999999993" fill="#000"/><rect x="1270.25" y="551.85" width="1.6" height="108.19999999999993" fill="#000"/><rect x="1335.75" y="551.85" width="1.6" height="108.19999999999993" fill="#000"/><rect x="1024.75" y="551.85" width="312.5" height="1.6" fill="#000"/><rect x="1024.75" y="573.25" width="312.5" height="1.6" fill="#000"/><rect x="1024.75" y="594.25" width="312.5" height="1.6" fill="#000"/><rect x="1024.75" y="625.55" width="312.5" height="1.6" fill="#000"/><rect x="1024.75" y="645.65" width="312.5" height="1.6" fill="#000"/><rect x="1024.75" y="658.55" width="312.5" height="1.6" fill="#000"/></svg>
<div class="a" style="left:1026px;width:89px;text-align:center;top:560.50px;font-size:8px;line-height:1;font-family:'Liberation Serif';"><span style="font-weight:bold;color:#0a0a0a">Үнэлгээний хэсэг</span></div>
<div class="a" style="left:1115px;width:46px;text-align:center;top:560.50px;font-size:8px;line-height:1;font-family:'Liberation Serif';"><span style="font-weight:bold;color:#0a0a0a">Жин (Оноо)</span></div>
<div class="a" style="left:1161px;width:110px;text-align:center;top:554.60px;font-size:8px;line-height:1;font-family:'Liberation Serif';"><span style="font-weight:bold;color:#0a0a0a">Ажлыг дүгнэх шалгуур</span></div>
<div class="a" style="left:1161px;width:110px;text-align:center;top:563.50px;font-size:8px;line-height:1;font-family:'Liberation Serif';"><span style="font-weight:bold;color:#0a0a0a">үзүүлэлт</span></div>
<div class="a" style="left:1271px;width:65px;text-align:center;top:554.60px;font-size:8px;line-height:1;font-family:'Liberation Serif';"><span style="font-weight:bold;color:#0a0a0a">Удирдлагаас</span></div>
<div class="a" style="left:1271px;width:65px;text-align:center;top:563.50px;font-size:8px;line-height:1;font-family:'Liberation Serif';"><span style="font-weight:bold;color:#0a0a0a">өгөх оноо</span></div>
<div class="a" style="left:1027px;top:581.90px;font-size:8px;line-height:1;font-family:'Liberation Serif';"><span style="font-weight:bold;color:#0a0a0a">Ажлын гүйцэтгэл (KPI)</span></div>
<div class="a" style="left:1115px;width:46px;text-align:center;top:581.90px;font-size:8px;line-height:1;font-family:'Liberation Serif';"><span style="font-weight:bold;color:#0a0a0a">70</span></div>
<div class="a" style="left:1163px;top:576.30px;font-size:8px;line-height:1;font-family:'Liberation Serif';"><span style="font-weight:normal;color:#404040">Гэрээнд заасан 5 зорилтын</span></div>
<div class="a" style="left:1163px;top:585.30px;font-size:8px;line-height:1;font-family:'Liberation Serif';"><span style="font-weight:normal;color:#404040">биелэлт (Амт, ариун цэвэр г.м)</span></div>
<div class="a" style="left:1027px;top:606.90px;font-size:8px;line-height:1;font-family:'Liberation Serif';"><span style="font-weight:bold;color:#0a0a0a">Мэргэшлийн түвшин</span></div>
<div class="a" style="left:1115px;width:46px;text-align:center;top:606.90px;font-size:8px;line-height:1;font-family:'Liberation Serif';"><span style="font-weight:bold;color:#0a0a0a">20</span></div>
<div class="a" style="left:1163px;top:597.30px;font-size:8px;line-height:1;font-family:'Liberation Serif';"><span style="font-weight:normal;color:#404040">Мэргэжлээрээ өсөн дэвжсэн</span></div>
<div class="a" style="left:1163px;top:606.90px;font-size:8px;line-height:1;font-family:'Liberation Serif';"><span style="font-weight:normal;color:#404040">байдал, сургалтад хамрагдсан</span></div>
<div class="a" style="left:1163px;top:616.50px;font-size:8px;line-height:1;font-family:'Liberation Serif';"><span style="font-weight:normal;color:#404040">байдал.</span></div>
<div class="a" style="left:1027px;top:633.80px;font-size:8px;line-height:1;font-family:'Liberation Serif';"><span style="font-weight:bold;color:#0a0a0a">Ёс зүй, хандлага</span></div>
<div class="a" style="left:1115px;width:46px;text-align:center;top:633.80px;font-size:8px;line-height:1;font-family:'Liberation Serif';"><span style="font-weight:bold;color:#0a0a0a">10</span></div>
<div class="a" style="left:1163px;top:628.70px;font-size:8px;line-height:1;font-family:'Liberation Serif';"><span style="font-weight:normal;color:#404040">Харилцаа, хандлага, сахилга</span></div>
<div class="a" style="left:1163px;top:637.70px;font-size:8px;line-height:1;font-family:'Liberation Serif';"><span style="font-weight:normal;color:#404040">бат, цаг ашиглалт.</span></div>
<div class="a" style="left:1027px;top:649.70px;font-size:8px;line-height:1;font-family:'Liberation Serif';"><span style="font-weight:bold;color:#0a0a0a">Дүн</span></div>
<div class="a" style="left:1115px;width:46px;text-align:center;top:649.70px;font-size:8px;line-height:1;font-family:'Liberation Serif';"><span style="font-weight:bold;color:#0a0a0a">100</span></div>
<div class="a" style="left:1163px;top:649.70px;font-size:8px;line-height:1;font-family:'Liberation Serif';"><span style="font-weight:normal;color:#404040">Удирдлагын өгсөн оноо:</span></div>
<div class="a" style="left:1025px;top:680.76px;font-size:9px;line-height:1;font-family:'Liberation Serif';"><span style="font-weight:bold;color:#0a0a0a">3. Үнэлгээний үр дүн ба үр дагавар</span></div>
<div class="a" style="left:1025px;top:699.70px;font-size:8px;line-height:1;font-family:'Liberation Serif';"><span style="font-weight:normal;color:#404040">Үнэлгээний оноооос хамаарч дараах шийдвэрүүдийг гаргана:</span></div>
<div class="a" style="left:1037.1px;top:719.4px;width:3.1px;height:3.3px;background:#111;border-radius:50%"></div>
<div class="a" style="left:1049.4px;top:717.60px;font-size:8px;line-height:1;font-family:'Liberation Serif';"><span style="font-weight:bold;color:#0a0a0a">90-100 оноо (&quot;Маш сайн&quot;):</span><span style="font-weight:normal;color:#404040"> Үр дүнгийн урамшуулал (цалингийн тодорхой хувь)</span></div>
<div class="a" style="left:1049.4px;top:726.60px;font-size:8px;line-height:1;font-family:'Liberation Serif';"><span style="font-weight:normal;color:#404040">олгох, алдаршуулах.</span></div>
<div class="a" style="left:1037.1px;top:737.4px;width:3.1px;height:3.3px;background:#111;border-radius:50%"></div>
<div class="a" style="left:1049.4px;top:735.60px;font-size:8px;line-height:1;font-family:'Liberation Serif';"><span style="font-weight:bold;color:#0a0a0a">80-89 оноо (&quot;Сайн&quot;):</span><span style="font-weight:normal;color:#404040"> Хэвийн ажиллаж байна гэж үзэх, шаардлагатай бол зарим</span></div>
<div class="a" style="left:1049.4px;top:745.40px;font-size:8px;line-height:1;font-family:'Liberation Serif';"><span style="font-weight:normal;color:#404040">дутагдлыг засах үүрэг өгөх.</span></div>
<div class="a" style="left:1037.1px;top:756.2px;width:3.1px;height:3.3px;background:#111;border-radius:50%"></div>
<div class="a" style="left:1049.4px;top:754.40px;font-size:8px;line-height:1;font-family:'Liberation Serif';"><span style="font-weight:bold;color:#0a0a0a">70-79 оноо (&quot;Дунд&quot;):</span><span style="font-weight:normal;color:#404040"> Ажлын гүйцэтгэлийг сайжруулах төлөвлөгөө гаргах,</span></div>
<div class="a" style="left:1049.4px;top:763.40px;font-size:8px;line-height:1;font-family:'Liberation Serif';"><span style="font-weight:normal;color:#404040">мэргэшүүлэх сургалтад илгээх.</span></div>
<div class="a" style="left:1037.1px;top:774.8000000000001px;width:3.1px;height:3.3px;background:#111;border-radius:50%"></div>
<div class="a" style="left:1049.4px;top:773.00px;font-size:8px;line-height:1;font-family:'Liberation Serif';"><span style="font-weight:bold;color:#0a0a0a">70-аас доош (&quot;Хангалтгүй&quot;):</span><span style="font-weight:normal;color:#404040"> Харилцааг тооцох, сургаж даддагажуулах, эсвэл</span></div>
<div class="a" style="left:1049.4px;top:782.30px;font-size:8px;line-height:1;font-family:'Liberation Serif';"><span style="font-weight:normal;color:#404040">ажлын байранд тэнцэхгүй гэж үзэж гэрээг цуцлах үндэслэл болох.</span></div>
<div class="a" style="left:1025px;top:819.46px;font-size:9px;line-height:1;font-family:'Liberation Serif';"><span style="font-weight:bold;color:#0a0a0a">4. Дүгнэсэн байдал</span></div>
<div class="a" style="left:1025px;top:839.70px;font-size:8px;line-height:1;font-family:'Liberation Serif';"><span style="font-weight:normal;color:#404040">Дүгнэх явцад удирдлага болон ажилтан ярилцаж, дараах тэмдэглэлийг хөтөлнө:</span></div>
<div class="a" style="left:1429px;top:380.90px;font-size:8px;line-height:1;font-family:'Liberation Serif';"><span style="font-weight:bold;color:#0a0a0a">Асуулт:</span><span style="font-weight:normal;color:#404040"> &quot;Та энэ хагас жилд хоолны нэр төрлийг хэрхэн нэмэгдүүлсэн бэ?&quot;</span></div>
<div class="a" style="left:1429px;top:399.10px;font-size:8px;line-height:1;font-family:'Liberation Serif';"><span style="font-weight:bold;color:#0a0a0a">Хариулт:</span><span style="font-weight:normal;color:#404040"> &quot;Технологийн картын дагуу 2 шинэ төрлийн зутан шөлийг цэсэнд нэмж</span></div>
<div class="a" style="left:1429px;top:409.20px;font-size:8px;line-height:1;font-family:'Liberation Serif';"><span style="font-weight:normal;color:#404040">оруулсан. Сурагчдын идэлт 15%-иар нэмэгдсэн.&quot;</span></div>
<div class="a" style="left:1429px;top:428.00px;font-size:8px;line-height:1;font-family:'Liberation Serif';"><span style="font-weight:bold;color:#0a0a0a">Шийдвэр:</span><span style="font-weight:normal;color:#404040"> Энэхүү санаачилгыг үнэлж &quot;Ажлын гүйцэтгэл&quot; хэсэгт дээд оноо өгөв.</span></div>
<div class="a" style="left:1429px;top:446.46px;font-size:9px;line-height:1;font-family:'Liberation Serif';"><span style="font-weight:bold;color:#0a0a0a">5. Баталгаажуулалт</span></div>
<div class="a" style="left:1453px;top:466.20px;font-size:8px;line-height:1;font-family:'Liberation Serif';"><span style="font-weight:normal;color:#404040">Ажилтан (Өөрийн үнэлгээг зөвшөөрсөн)</span></div>
<div class="a" style="left:1477px;top:484.30px;font-size:8px;line-height:1;font-family:'Liberation Serif';"><span style="font-weight:normal;color:#404040">Үдийн хоолны тогооч</span></div>
<div class="a" style="left:1621px;top:488.5px;width:58px;height:0.7px;background:#8a8a8a"></div>
<div class="a" style="left:1453px;top:503.40px;font-size:8px;line-height:1;font-family:'Liberation Serif';"><span style="font-weight:normal;color:#404040">Шууд удирдлага (Үнэлгээ хийсэн)</span></div>
<div class="a" style="left:1477px;top:521.50px;font-size:8px;line-height:1;font-family:'Liberation Serif';"><span style="font-weight:normal;color:#404040">Хоол зүйч</span></div>
<div class="a" style="left:1621px;top:525.8px;width:64px;height:0.7px;background:#8a8a8a"></div>
<div class="a" style="left:1453px;top:540.30px;font-size:8px;line-height:1;font-family:'Liberation Serif';"><span style="font-weight:normal;color:#404040">Сургуулийн захирал (Хянасан)</span></div>
<div class="a" style="left:1621px;top:545px;width:72px;height:0.7px;background:#8a8a8a"></div>
<div class="a" style="left:0px;top:993px;width:1919px;height:26px;background:#f4f4f4;border-top:1px solid #fff"></div>
<div class="a" style="left:14px;top:1001.31px;font-size:13.1px;line-height:1;color:#242424;font-weight:normal;font-family:'Liberation Sans';">Page 1 of 4</div>
<div class="a" style="left:107px;top:1001.31px;font-size:13.1px;line-height:1;color:#424242;font-weight:normal;font-family:'Liberation Sans';">522 words</div>
<svg style="left:192px;top:999px" width="20" height="18" viewBox="0 0 20 18"><path d="M9.5 1.5 H1.5 V16 H9.5 M9.5 1.5 V16 M9.5 1.5 H17.5 V8" fill="none" stroke="#424242" stroke-width="1.2"/><path d="M11.5 10.5 L17.5 16.5 M17.5 10.5 L11.5 16.5" stroke="#424242" stroke-width="1.2"/></svg>
<div class="a" style="left:233.5px;top:1000.97px;font-size:13.5px;line-height:1;color:#242424;font-weight:normal;font-family:'Liberation Sans';">Mongolian (Mongolia)</div>
<svg style="left:388px;top:999px" width="20" height="18" viewBox="0 0 20 18"><rect x="1" y="1.5" width="17" height="14" fill="none" stroke="#424242" stroke-width="1.1"/><path d="M1 4.5 H18 M3.5 8 H8 M3.5 11 H7" stroke="#424242" stroke-width="1.1"/><circle cx="13" cy="12" r="3.8" fill="#fff" stroke="#424242" stroke-width="1.1"/><circle cx="13" cy="12" r="1.8" fill="#424242"/></svg>
<svg style="left:428px;top:998px" width="22" height="20" viewBox="0 0 22 20"><circle cx="9" cy="3" r="2" fill="none" stroke="#424242" stroke-width="1.1"/><path d="M1.5 6.5 Q9 8.5 16.5 6.5 M9 7.5 V12 L5.5 18.5 M9 12 L11 15" fill="none" stroke="#424242" stroke-width="1.2"/><path d="M12 15 L14.5 17.5 L20 11.5" fill="none" stroke="#424242" stroke-width="1.3"/></svg>
<div class="a" style="left:450.5px;top:1001.23px;font-size:13.2px;line-height:1;color:#242424;font-weight:normal;font-family:'Liberation Sans';">Accessibility: Good to go</div>
<svg style="left:1483px;top:997px" width="20" height="20" viewBox="0 0 20 20"><path d="M1 5 V1 H5 M15 1 H19 V5 M19 15 V19 H15 M5 19 H1 V15" fill="none" stroke="#424242" stroke-width="1.2"/><path d="M6 4 H11.5 L14.5 7 V16 H6 Z M11.5 4 V7 H14.5" fill="none" stroke="#424242" stroke-width="1.2"/></svg>
<div class="a" style="left:1505.5px;top:1001.65px;font-size:12.7px;line-height:1;color:#242424;font-weight:normal;font-family:'Liberation Sans';">Focus</div>
<svg style="left:1569px;top:998px" width="18" height="17" viewBox="0 0 18 17"><path d="M1 2 H6.5 Q9 2 9 4 Q9 2 11.5 2 H17 V14.5 H11.5 Q9 14.5 9 16 Q9 14.5 6.5 14.5 H1 Z M9 4 V16" fill="none" stroke="#424242" stroke-width="1.2"/><path d="M3 6 H7 M3 9 H7 M11 6 H15 M11 9 H15" stroke="#424242" stroke-width="1"/></svg>
<div class="a" style="left:1604px;top:993px;width:50px;height:26px;background:#dcdcdc"></div>
<svg style="left:1620px;top:998px" width="16" height="19" viewBox="0 0 16 19"><rect x="1" y="1" width="13.5" height="16.5" fill="none" stroke="#424242" stroke-width="1.2"/><path d="M3.5 4.5 H12 M3.5 7.5 H12 M3.5 10.5 H12 M3.5 13.5 H12" stroke="#424242" stroke-width="1.2"/></svg>
<svg style="left:1669px;top:998px" width="20" height="19" viewBox="0 0 20 19"><path d="M10 16.5 H1 V1 H15 V7" fill="none" stroke="#424242" stroke-width="1.2"/><path d="M3.5 4 H12.5 M3.5 7 H9 M3.5 10 H8" stroke="#424242" stroke-width="1.1"/><circle cx="14" cy="13" r="4.8" fill="#fff" stroke="#424242" stroke-width="1.1"/><path d="M9.2 13 H18.8 M14 8.2 V17.8 M14 8.2 Q11 13 14 17.8 M14 8.2 Q17 13 14 17.8" fill="none" stroke="#424242" stroke-width="0.9"/></svg>
<div class="a" style="left:1711px;top:1006px;width:10px;height:1.2px;background:#424242"></div>
<div class="a" style="left:1727px;top:1006.5px;width:125px;height:1px;background:#6e6e6e"></div>
<div class="a" style="left:1789px;top:1002px;width:1px;height:9px;background:#6e6e6e"></div>
<div class="a" style="left:1748px;top:1000px;width:5.5px;height:14px;background:#5c5c5c;border-radius:1px"></div>
<div class="a" style="left:1857.5px;top:1006px;width:10px;height:1.2px;background:#424242"></div>
<div class="a" style="left:1862px;top:1001.5px;width:1.2px;height:10px;background:#424242"></div>
<div class="a" style="left:1884px;top:1001.23px;font-size:13.2px;line-height:1;color:#424242;font-weight:normal;font-family:'Liberation Sans';">40%</div>
</body></html>
